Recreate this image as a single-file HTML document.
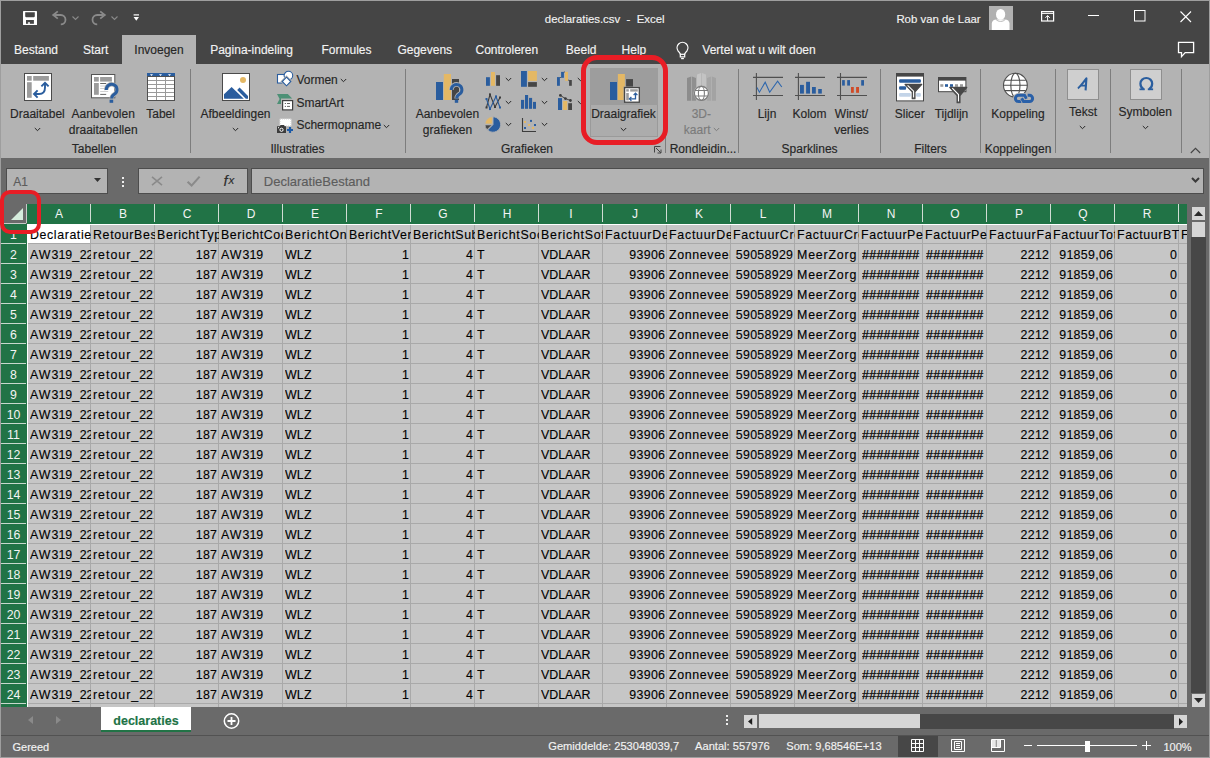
<!DOCTYPE html><html><head><meta charset="utf-8"><style>
html,body{margin:0;padding:0}
body{width:1210px;height:758px;overflow:hidden;position:relative;background:#6a6a6a;font-family:"Liberation Sans",sans-serif}
.t{position:absolute;white-space:pre;-webkit-text-stroke:0.15px currentColor}
.g .t{-webkit-text-stroke:0.12px #000}
.r{position:absolute}
svg.r{overflow:visible}
</style></head><body>
<div class="r" style="left:0px;top:0px;width:1210px;height:64px;background:#454545;"></div>
<div class="t" style="left:404.70px;width:400px;text-align:center;top:14.15px;font-size:11.4px;line-height:11.4px;color:#f2f2f2;font-weight:400;">declaraties.csv  -  Excel</div>
<div class="t" style="left:896.40px;top:14.35px;font-size:11.4px;line-height:11.4px;color:#f2f2f2;font-weight:400;">Rob van de Laar</div>
<svg class="r" style="left:23px;top:11px;" width="14" height="14" viewBox="0 0 14 14"><rect x="0" y="0" width="14" height="14" rx="0.6" fill="#fff"/><path d="M2.2 1.2H11.8V5.6L11 6.3H3L2.2 5.6Z" fill="#454545"/><rect x="3" y="9" width="7.9" height="3.8" fill="#454545"/><rect x="4.9" y="11.3" width="2.1" height="1.5" fill="#fff"/></svg>
<svg class="r" style="left:51px;top:10px;" width="17" height="15" viewBox="0 0 17 15"><path d="M3.5 5H9.8A4.7 4.7 0 0 1 9.8 14.4" fill="none" stroke="#8a8a8a" stroke-width="1.8"/><path d="M6.8 1.4L2.2 5L6.8 8.6" fill="none" stroke="#8a8a8a" stroke-width="1.8"/></svg>
<svg class="r" style="left:71px;top:15px;" width="9" height="6" viewBox="0 0 9 6"><path d="M1.5 1.5l3 3l3-3" fill="none" stroke="#8a8a8a" stroke-width="1.1"/></svg>
<svg class="r" style="left:90px;top:10px;" width="17" height="15" viewBox="0 0 17 15"><path d="M13.5 5H7.2A4.7 4.7 0 0 0 7.2 14.4" fill="none" stroke="#8a8a8a" stroke-width="1.8"/><path d="M10.2 1.4L14.8 5L10.2 8.6" fill="none" stroke="#8a8a8a" stroke-width="1.8"/></svg>
<svg class="r" style="left:110px;top:15px;" width="9" height="6" viewBox="0 0 9 6"><path d="M1.5 1.5l3 3l3-3" fill="none" stroke="#8a8a8a" stroke-width="1.1"/></svg>
<svg class="r" style="left:133px;top:14px;" width="7" height="8" viewBox="0 0 7 8"><rect x="0.6" y="0.3" width="5.4" height="1.2" fill="#fff"/><path d="M0.6 3h5.4l-2.7 3.8z" fill="#fff"/></svg>
<svg class="r" style="left:989px;top:6px;" width="24" height="24" viewBox="0 0 24 24"><rect width="24" height="24" fill="#b1b1b1"/><ellipse cx="11.6" cy="8.4" rx="4.6" ry="5.4" fill="#fff"/><path d="M2.8 24V17.5C2.8 15 4.8 13.4 7.6 13.4H15.8C18.6 13.4 20.5 15 20.5 17.5V24Z" fill="#fff"/><path d="M7 13.4C8 14.6 9.6 15.4 11.6 15.4S15.2 14.6 16.2 13.4" fill="none" stroke="#b1b1b1" stroke-width="0.9"/></svg>
<svg class="r" style="left:1041px;top:11px;" width="14" height="11" viewBox="0 0 14 11"><rect x="0.6" y="0.6" width="12" height="9.4" fill="none" stroke="#fff" stroke-width="1.2"/><path d="M0.6 2.4H12.6" stroke="#fff" stroke-width="1"/><path d="M6.6 10V4.6M4.4 6.8L6.6 4.6L8.8 6.8" fill="none" stroke="#fff" stroke-width="1"/></svg>
<div class="r" style="left:1088px;top:15px;width:11px;height:1px;background:#fff;"></div>
<svg class="r" style="left:1134px;top:10px;" width="12" height="12" viewBox="0 0 12 12"><rect x="0.5" y="0.5" width="10.5" height="10.5" fill="none" stroke="#fff"/></svg>
<svg class="r" style="left:1180px;top:11px;" width="12" height="11" viewBox="0 0 12 11"><path d="M0.5 0.5l10.5 10.5M11 0.5L0.5 11" stroke="#fff" stroke-width="1.1"/></svg>
<div class="r" style="left:122px;top:35px;width:74px;height:29px;background:#b3b3b3;"></div>
<div class="t" style="left:14.00px;top:43.64px;font-size:12px;line-height:12px;color:#f2f2f2;font-weight:400;">Bestand</div>
<div class="t" style="left:83.00px;top:43.64px;font-size:12px;line-height:12px;color:#f2f2f2;font-weight:400;">Start</div>
<div class="t" style="left:210.20px;top:43.64px;font-size:12px;line-height:12px;color:#f2f2f2;font-weight:400;">Pagina-indeling</div>
<div class="t" style="left:321.50px;top:43.64px;font-size:12px;line-height:12px;color:#f2f2f2;font-weight:400;">Formules</div>
<div class="t" style="left:397.40px;top:43.64px;font-size:12px;line-height:12px;color:#f2f2f2;font-weight:400;">Gegevens</div>
<div class="t" style="left:475.50px;top:43.64px;font-size:12px;line-height:12px;color:#f2f2f2;font-weight:400;">Controleren</div>
<div class="t" style="left:565.80px;top:43.64px;font-size:12px;line-height:12px;color:#f2f2f2;font-weight:400;">Beeld</div>
<div class="t" style="left:621.60px;top:43.64px;font-size:12px;line-height:12px;color:#f2f2f2;font-weight:400;">Help</div>
<div class="t" style="left:134.30px;top:43.64px;font-size:12px;line-height:12px;color:#262626;font-weight:400;">Invoegen</div>
<svg class="r" style="left:675px;top:42px;" width="16" height="17" viewBox="0 0 16 17"><path d="M5.4 12.3C4.9 11 4.1 10.2 3.2 9.1A5.4 5.4 0 1 1 11.8 9.1C10.9 10.2 10.1 11 9.6 12.3" fill="none" stroke="#fff" stroke-width="1.3"/><rect x="5.3" y="12.3" width="4.4" height="2.6" fill="none" stroke="#fff" stroke-width="1.2"/><path d="M6.1 16.6H8.9" stroke="#fff" stroke-width="1.2"/></svg>
<div class="t" style="left:702.30px;top:43.64px;font-size:12px;line-height:12px;color:#f2f2f2;font-weight:400;">Vertel wat u wilt doen</div>
<svg class="r" style="left:1177px;top:41px;" width="18" height="17" viewBox="0 0 18 17"><path d="M1.5 1.3H16.6V11.6H8.2L4.5 15.6V11.6H1.5Z" fill="none" stroke="#fff" stroke-width="1.3"/></svg>
<div class="r" style="left:0px;top:64px;width:1210px;height:94px;background:#b3b3b3;"></div>
<div class="r" style="left:190px;top:69px;width:1px;height:84px;background:#7d7d7d;"></div>
<div class="r" style="left:405px;top:69px;width:1px;height:84px;background:#7d7d7d;"></div>
<div class="r" style="left:665px;top:69px;width:1px;height:84px;background:#7d7d7d;"></div>
<div class="r" style="left:738px;top:69px;width:1px;height:84px;background:#7d7d7d;"></div>
<div class="r" style="left:880px;top:69px;width:1px;height:84px;background:#7d7d7d;"></div>
<div class="r" style="left:980px;top:69px;width:1px;height:84px;background:#7d7d7d;"></div>
<div class="r" style="left:1055px;top:69px;width:1px;height:84px;background:#7d7d7d;"></div>
<div class="r" style="left:1110px;top:69px;width:1px;height:84px;background:#7d7d7d;"></div>
<div class="r" style="left:1181px;top:69px;width:1px;height:84px;background:#7d7d7d;"></div>
<div class="t" style="left:-105.80px;width:400px;text-align:center;top:143.14px;font-size:12px;line-height:12px;color:#262626;font-weight:400;">Tabellen</div>
<div class="t" style="left:97.50px;width:400px;text-align:center;top:143.14px;font-size:12px;line-height:12px;color:#262626;font-weight:400;">Illustraties</div>
<div class="t" style="left:327.00px;width:400px;text-align:center;top:143.14px;font-size:12px;line-height:12px;color:#262626;font-weight:400;">Grafieken</div>
<div class="t" style="left:609.60px;width:400px;text-align:center;top:143.14px;font-size:12px;line-height:12px;color:#262626;font-weight:400;">Sparklines</div>
<div class="t" style="left:730.50px;width:400px;text-align:center;top:143.14px;font-size:12px;line-height:12px;color:#262626;font-weight:400;">Filters</div>
<div class="t" style="left:818.00px;width:400px;text-align:center;top:143.14px;font-size:12px;line-height:12px;color:#262626;font-weight:400;">Koppelingen</div>
<div class="t" style="left:669.70px;top:143.14px;font-size:12px;line-height:12px;color:#262626;font-weight:400;">Rondleidin...</div>
<div class="t" style="left:-162.60px;width:400px;text-align:center;top:107.74px;font-size:12px;line-height:12px;color:#262626;font-weight:400;">Draaitabel</div>
<svg class="r" style="left:34.1px;top:127.0px;" width="7" height="5" viewBox="0 0 7 5"><path d="M0.8 1l2.7 2.7L6.2 1" fill="none" stroke="#262626" stroke-width="1"/></svg>
<div class="t" style="left:-96.80px;width:400px;text-align:center;top:107.74px;font-size:12px;line-height:12px;color:#262626;font-weight:400;">Aanbevolen</div>
<div class="t" style="left:-96.80px;width:400px;text-align:center;top:124.04px;font-size:12px;line-height:12px;color:#262626;font-weight:400;">draaitabellen</div>
<div class="t" style="left:-39.40px;width:400px;text-align:center;top:107.74px;font-size:12px;line-height:12px;color:#262626;font-weight:400;">Tabel</div>
<div class="t" style="left:35.50px;width:400px;text-align:center;top:107.74px;font-size:12px;line-height:12px;color:#262626;font-weight:400;">Afbeeldingen</div>
<svg class="r" style="left:232.0px;top:127.0px;" width="7" height="5" viewBox="0 0 7 5"><path d="M0.8 1l2.7 2.7L6.2 1" fill="none" stroke="#262626" stroke-width="1"/></svg>
<div class="t" style="left:296.40px;top:73.84px;font-size:12px;line-height:12px;color:#262626;font-weight:400;">Vormen</div>
<svg class="r" style="left:340.0px;top:78.0px;" width="7" height="5" viewBox="0 0 7 5"><path d="M0.8 1l2.7 2.7L6.2 1" fill="none" stroke="#262626" stroke-width="1"/></svg>
<div class="t" style="left:296.40px;top:96.84px;font-size:12px;line-height:12px;color:#262626;font-weight:400;">SmartArt</div>
<div class="t" style="left:296.40px;top:119.44px;font-size:12px;line-height:12px;color:#262626;font-weight:400;">Schermopname</div>
<svg class="r" style="left:383.0px;top:123.5px;" width="7" height="5" viewBox="0 0 7 5"><path d="M0.8 1l2.7 2.7L6.2 1" fill="none" stroke="#262626" stroke-width="1"/></svg>
<div class="t" style="left:247.40px;width:400px;text-align:center;top:107.54px;font-size:12px;line-height:12px;color:#262626;font-weight:400;">Aanbevolen</div>
<div class="t" style="left:247.50px;width:400px;text-align:center;top:124.14px;font-size:12px;line-height:12px;color:#262626;font-weight:400;">grafieken</div>
<svg class="r" style="left:505.2px;top:77.0px;" width="7" height="5" viewBox="0 0 7 5"><path d="M0.8 1l2.7 2.7L6.2 1" fill="none" stroke="#262626" stroke-width="1"/></svg>
<svg class="r" style="left:505.2px;top:99.5px;" width="7" height="5" viewBox="0 0 7 5"><path d="M0.8 1l2.7 2.7L6.2 1" fill="none" stroke="#262626" stroke-width="1"/></svg>
<svg class="r" style="left:505.2px;top:122.0px;" width="7" height="5" viewBox="0 0 7 5"><path d="M0.8 1l2.7 2.7L6.2 1" fill="none" stroke="#262626" stroke-width="1"/></svg>
<svg class="r" style="left:541.0px;top:77.0px;" width="7" height="5" viewBox="0 0 7 5"><path d="M0.8 1l2.7 2.7L6.2 1" fill="none" stroke="#262626" stroke-width="1"/></svg>
<svg class="r" style="left:541.0px;top:99.5px;" width="7" height="5" viewBox="0 0 7 5"><path d="M0.8 1l2.7 2.7L6.2 1" fill="none" stroke="#262626" stroke-width="1"/></svg>
<svg class="r" style="left:541.0px;top:122.0px;" width="7" height="5" viewBox="0 0 7 5"><path d="M0.8 1l2.7 2.7L6.2 1" fill="none" stroke="#262626" stroke-width="1"/></svg>
<svg class="r" style="left:576.8px;top:77.0px;" width="7" height="5" viewBox="0 0 7 5"><path d="M0.8 1l2.7 2.7L6.2 1" fill="none" stroke="#262626" stroke-width="1"/></svg>
<svg class="r" style="left:576.8px;top:99.5px;" width="7" height="5" viewBox="0 0 7 5"><path d="M0.8 1l2.7 2.7L6.2 1" fill="none" stroke="#262626" stroke-width="1"/></svg>
<svg class="r" style="left:654px;top:146px;" width="8" height="7" viewBox="0 0 8 7"><path d="M0.5 6.5v-6h6" fill="none" stroke="#444"/><path d="M2 2l5 5M3.5 7h3.5v-3.5" fill="none" stroke="#444"/></svg>
<div class="r" style="left:590px;top:68px;width:68px;height:37px;background:#9d9d9d;"></div>
<div class="r" style="left:590px;top:105px;width:68px;height:32px;background:#acacac;box-sizing:border-box;border:1px solid #9a9a9a;border-top:none"></div>
<div class="t" style="left:423.50px;width:400px;text-align:center;top:107.74px;font-size:12px;line-height:12px;color:#262626;font-weight:400;">Draaigrafiek</div>
<svg class="r" style="left:619.8px;top:126.9px;" width="7" height="5" viewBox="0 0 7 5"><path d="M0.8 1l2.7 2.7L6.2 1" fill="none" stroke="#262626" stroke-width="1"/></svg>
<div class="t" style="left:501.30px;width:400px;text-align:center;top:107.74px;font-size:12px;line-height:12px;color:#7b7b7b;font-weight:400;">3D-</div>
<div class="t" style="left:683.80px;top:123.94px;font-size:12px;line-height:12px;color:#7b7b7b;font-weight:400;">kaart</div>
<svg class="r" style="left:712.5px;top:127.0px;" width="7" height="5" viewBox="0 0 7 5"><path d="M0.8 1l2.7 2.7L6.2 1" fill="none" stroke="#7b7b7b" stroke-width="1"/></svg>
<div class="t" style="left:567.00px;width:400px;text-align:center;top:107.74px;font-size:12px;line-height:12px;color:#262626;font-weight:400;">Lijn</div>
<div class="t" style="left:609.50px;width:400px;text-align:center;top:107.74px;font-size:12px;line-height:12px;color:#262626;font-weight:400;">Kolom</div>
<div class="t" style="left:651.50px;width:400px;text-align:center;top:107.74px;font-size:12px;line-height:12px;color:#262626;font-weight:400;">Winst/</div>
<div class="t" style="left:651.50px;width:400px;text-align:center;top:123.94px;font-size:12px;line-height:12px;color:#262626;font-weight:400;">verlies</div>
<div class="t" style="left:709.80px;width:400px;text-align:center;top:107.74px;font-size:12px;line-height:12px;color:#262626;font-weight:400;">Slicer</div>
<div class="t" style="left:751.50px;width:400px;text-align:center;top:107.74px;font-size:12px;line-height:12px;color:#262626;font-weight:400;">Tijdlijn</div>
<div class="t" style="left:818.00px;width:400px;text-align:center;top:107.74px;font-size:12px;line-height:12px;color:#262626;font-weight:400;">Koppeling</div>
<div class="r" style="left:1067px;top:69px;width:32px;height:31px;background:#cfcfcf;box-sizing:border-box;border:1px solid #8f8f8f"></div>
<div class="r" style="left:1130px;top:69px;width:32px;height:31px;background:#cfcfcf;box-sizing:border-box;border:1px solid #8f8f8f"></div>
<div class="t" style="left:883.00px;width:400px;text-align:center;top:105.74px;font-size:12px;line-height:12px;color:#262626;font-weight:400;">Tekst</div>
<svg class="r" style="left:1079.0px;top:125.1px;" width="7" height="5" viewBox="0 0 7 5"><path d="M0.8 1l2.7 2.7L6.2 1" fill="none" stroke="#262626" stroke-width="1"/></svg>
<div class="t" style="left:945.30px;width:400px;text-align:center;top:105.74px;font-size:12px;line-height:12px;color:#262626;font-weight:400;">Symbolen</div>
<svg class="r" style="left:1142.0px;top:125.1px;" width="7" height="5" viewBox="0 0 7 5"><path d="M0.8 1l2.7 2.7L6.2 1" fill="none" stroke="#262626" stroke-width="1"/></svg>
<svg class="r" style="left:1190px;top:147px;" width="11" height="7" viewBox="0 0 11 7"><path d="M0.8 6l4.7-4.7L10.2 6" fill="none" stroke="#444" stroke-width="1.1"/></svg>
<svg class="r" style="left:24px;top:73px;" width="28" height="28" viewBox="0 0 28 28"><rect x="0.5" y="0.5" width="27" height="27" fill="#fff" stroke="#4a4a4a"/><rect x="3" y="3" width="4.7" height="4.7" fill="#9c9c9c"/><rect x="9.2" y="3" width="15.7" height="4.7" fill="#9c9c9c"/><rect x="3" y="9.2" width="4.7" height="15.6" fill="#9c9c9c"/><path d="M10.3 21H15C18.8 21 21 18.6 21 14.5V10.2" fill="none" stroke="#2a5d9e" stroke-width="1.9"/><path d="M13.6 17.4L10 21L13.6 24.6M17.4 13.4L21 9.8L24.6 13.4" fill="none" stroke="#2a5d9e" stroke-width="1.9"/></svg>
<svg class="r" style="left:91px;top:74px;" width="30" height="30" viewBox="0 0 30 30"><rect x="0.5" y="0.5" width="23.3" height="23.3" fill="#fff" stroke="#555"/><rect x="3" y="3" width="4.8" height="4.6" fill="#9c9c9c"/><rect x="9.1" y="3" width="11.8" height="4.6" fill="#9c9c9c"/><rect x="3" y="9" width="4.8" height="11.8" fill="#9c9c9c"/><path d="M9.2 9.5h6M9.2 20.4h6" stroke="#555" stroke-width="0.9"/><path d="M9.2 12h8M9.2 14.5h8M9.2 17.5h8" stroke="#d0d0d0" stroke-width="1.2"/><path d="M15.3 16A5.35 5.35 0 1 1 24 19.8C22.2 21 20.7 21.8 20.7 24.4" fill="none" stroke="#b3b3b3" stroke-width="4.4"/><rect x="17.6" y="24.8" width="5.5" height="4.9" fill="#b3b3b3"/><path d="M15.3 16A5.35 5.35 0 1 1 24 19.8C22.2 21 20.7 21.8 20.7 24.4" fill="none" stroke="#2a5d9e" stroke-width="3"/><rect x="18.6" y="25.7" width="3.6" height="3.1" fill="#2a5d9e"/></svg>
<svg class="r" style="left:147px;top:73px;" width="28" height="28" viewBox="0 0 28 28"><rect x="0.5" y="0.5" width="27" height="27" fill="#fff" stroke="#505050"/><rect x="0" y="0" width="28" height="4" fill="#2a5d9e"/><path d="M3 1.3h3L4.5 3zM12 1.3h3L13.5 3zM21 1.3h3L22.5 3z" fill="#fff"/><path d="M9.5 4v23.5M18.5 4v23.5M1 7.5h26M1 11.5h26M1 15.5h26M1 19.5h26M1 23.5h26" stroke="#9a9a9a" stroke-width="1"/><rect x="0.5" y="3.5" width="27" height="24" fill="none" stroke="#505050"/></svg>
<svg class="r" style="left:222px;top:73px;" width="28" height="28" viewBox="0 0 28 28"><rect x="0.5" y="0.5" width="27" height="27" fill="#fff" stroke="#4a4a4a"/><circle cx="21" cy="7" r="3" fill="#e4b865"/><path d="M2 25.8V21.3L9.6 14L21.8 25.8Z" fill="#2a5d9e"/><path d="M15.2 17L17.6 14.6L26 22.9V25.8H23.8Z" fill="#2a5d9e"/></svg>
<svg class="r" style="left:276px;top:70px;" width="18" height="18" viewBox="0 0 18 18"><rect x="1.5" y="4.5" width="8.8" height="8.5" fill="#fff" stroke="#2a5d9e" stroke-width="1.1"/><circle cx="12.4" cy="5.6" r="4.3" fill="#fff" stroke="#2a5d9e" stroke-width="1.1"/><path d="M10.5 7.2L14.8 11.5L10.5 15.8L6.2 11.5Z" fill="#fff" stroke="#b3b3b3" stroke-width="2.6"/><path d="M10.5 7.2L14.8 11.5L10.5 15.8L6.2 11.5Z" fill="#fff" stroke="#2a5d9e" stroke-width="1.1"/></svg>
<svg class="r" style="left:276px;top:92px;" width="18" height="19" viewBox="0 0 18 19"><path d="M1 2H11.8L16.2 6.6H5V12H1L3.6 7Z" fill="#4d9076"/><rect x="5.8" y="7.8" width="11.6" height="10.6" fill="#b3b3b3"/><rect x="6.6" y="8.6" width="10" height="9.3" fill="#fff" stroke="#404040" stroke-width="1.2"/><path d="M8.8 11.5h1.2M11 11.5h3M8.8 14.4h1.2M11 14.4h3" stroke="#666" stroke-width="1"/></svg>
<svg class="r" style="left:276px;top:118px;" width="18" height="16" viewBox="0 0 18 16"><rect x="3.8" y="0.8" width="11.5" height="7.4" fill="#fff"/><path d="M4 1h11M4 8h11M4 1v7M15 1v7" stroke="#ccc" stroke-width="0.9" stroke-dasharray="1 1"/><path d="M1 8.3h2.8l0.8-1.2h3.3l0.8 1.2H10v6.6H1z" fill="#3c3c3c"/><circle cx="5.5" cy="11.8" r="1.6" fill="none" stroke="#fff" stroke-width="1"/><rect x="2" y="9.2" width="1" height="1" fill="#fff"/><path d="M14 9v6M11 12h6" stroke="#1d5aa6" stroke-width="2.2"/></svg>
<svg class="r" style="left:435px;top:73px;" width="30" height="30" viewBox="0 0 30 30"><rect x="1" y="9" width="7" height="18" fill="#2a5d9e"/><rect x="8.8" y="1" width="7.2" height="26" fill="#e4b865"/><rect x="17" y="6" width="7" height="21" fill="#454545"/><path d="M16.3 17A5.3 5.3 0 1 1 25 20.8C23.2 22 21.7 22.8 21.7 25.4" fill="none" stroke="#b3b3b3" stroke-width="4.6"/><path d="M16.3 17A5.3 5.3 0 1 1 25 20.8C23.2 22 21.7 22.8 21.7 25.4" fill="none" stroke="#2a5d9e" stroke-width="3"/><rect x="19.8" y="26.6" width="3.4" height="3.2" fill="#2a5d9e"/></svg>
<svg class="r" style="left:485px;top:71px;" width="16" height="16" viewBox="0 0 16 16"><rect x="1" y="6.2" width="3.9" height="8.6" fill="#2a5d9e"/><rect x="6" y="1" width="4" height="13.8" fill="#e4b865"/><rect x="11.1" y="4.2" width="3.9" height="10.6" fill="#454545"/></svg>
<svg class="r" style="left:521px;top:71px;" width="16" height="16" viewBox="0 0 16 16"><rect x="0" y="0" width="5.9" height="15.8" fill="#2a5d9e"/><rect x="7.1" y="0" width="8.8" height="9.9" fill="#e4b865"/><rect x="7.1" y="11.1" width="8.8" height="4.7" fill="#454545"/></svg>
<svg class="r" style="left:556px;top:71px;" width="16" height="16" viewBox="0 0 16 16"><rect x="1" y="6.1" width="2.9" height="8.7" fill="#2a5d9e"/><rect x="5.1" y="0.9" width="2.8" height="5.9" fill="#2a5d9e"/><rect x="9" y="0.9" width="3" height="8.9" fill="#e4b865"/><rect x="13.1" y="9" width="2.7" height="5.8" fill="#454545"/><path d="M3.9 6.5h1.2M7.9 1h1.1M12 9.2h1.1" stroke="#222" stroke-width="0.6"/></svg>
<svg class="r" style="left:485px;top:93px;" width="16" height="18" viewBox="0 0 16 18"><path d="M1.5 14.5L5 1.5L10 14L15 4.5" fill="none" stroke="#3c3c3c" stroke-width="1.1"/><path d="M1.5 6L5 16L11 3.5L15 14.5" fill="none" stroke="#2a5d9e" stroke-width="1.1"/><rect x="0.5" y="13.5" width="2" height="2" fill="#3c3c3c"/><rect x="4" y="0.5" width="2" height="2" fill="#3c3c3c"/><rect x="9" y="13" width="2" height="2" fill="#3c3c3c"/><rect x="14" y="3.5" width="2" height="2" fill="#3c3c3c"/><rect x="0.5" y="5" width="2" height="2" fill="#2a5d9e"/><rect x="4" y="15" width="2" height="2" fill="#2a5d9e"/><rect x="10" y="2.5" width="2" height="2" fill="#2a5d9e"/><rect x="14" y="13.5" width="2" height="2" fill="#2a5d9e"/></svg>
<svg class="r" style="left:521px;top:94px;" width="16" height="16" viewBox="0 0 16 16"><rect x="0" y="5.9" width="3.1" height="8.9" fill="#2a5d9e"/><rect x="4" y="1" width="3.1" height="13.8" fill="#2a5d9e"/><rect x="8" y="3.9" width="3.1" height="10.9" fill="#2a5d9e"/><rect x="12" y="7.9" width="3" height="6.9" fill="#2a5d9e"/></svg>
<svg class="r" style="left:557px;top:93px;" width="16" height="18" viewBox="0 0 16 18"><rect x="1" y="5.1" width="4" height="11.9" fill="#2a5d9e"/><rect x="6.1" y="8" width="4.1" height="9" fill="#e4b865"/><rect x="11.2" y="10.2" width="3.8" height="6.8" fill="#454545"/><path d="M3.4 2.4L8.4 5.6L13.4 7.5" fill="none" stroke="#3c3c3c" stroke-width="0.9"/><circle cx="3.4" cy="2.4" r="1.4" fill="#3c3c3c"/><circle cx="8.4" cy="5.6" r="1.4" fill="#3c3c3c"/><circle cx="13.4" cy="7.5" r="1.4" fill="#3c3c3c"/></svg>
<svg class="r" style="left:484px;top:116px;" width="17" height="17" viewBox="0 0 17 17"><path d="M9 0.8A7.7 7.7 0 1 1 3.6 14L9 8.6Z" fill="#2a5d9e" stroke="#b3b3b3" stroke-width="0.9"/><path d="M8.3 0.8V8H1A7.3 7.3 0 0 1 8.3 0.8Z" fill="#e4b865" stroke="#b3b3b3" stroke-width="0.7"/><path d="M1 8.9H8L3.1 13.6A7.3 7.3 0 0 1 1 8.9Z" fill="#454545" stroke="#b3b3b3" stroke-width="0.7"/></svg>
<svg class="r" style="left:521px;top:117px;" width="16" height="16" viewBox="0 0 16 16"><path d="M1.5 1v13.5H15" fill="none" stroke="#3c3c3c" stroke-width="1.1"/><rect x="3" y="4" width="2" height="2" fill="#e4b865"/><rect x="9" y="2.9" width="2" height="2" fill="#2a5d9e"/><rect x="7" y="7" width="2" height="2" fill="#e4b865"/><rect x="13" y="7" width="2" height="2" fill="#2a5d9e"/><rect x="3" y="10" width="2" height="2" fill="#2a5d9e"/><rect x="11" y="10" width="2" height="2" fill="#e4b865"/></svg>
<svg class="r" style="left:609px;top:73px;" width="32" height="31" viewBox="0 0 32 31"><rect x="1" y="9" width="7" height="18" fill="#2a5d9e"/><rect x="8.9" y="1" width="7" height="26" fill="#e4b865"/><rect x="17.1" y="6.1" width="6.9" height="8" fill="#454545"/><rect x="14.5" y="13.5" width="17" height="17" fill="#9b9b9b"/><rect x="15.6" y="14.6" width="14.7" height="14.6" fill="#fff" stroke="#474747" stroke-width="1.3"/><rect x="17.2" y="16.2" width="2.6" height="2.4" fill="#9c9c9c"/><rect x="21.2" y="16.2" width="7.6" height="2.4" fill="#9c9c9c"/><rect x="17.2" y="20" width="2.6" height="7.4" fill="#9c9c9c"/><path d="M20.5 25.8H26.5V20.2" fill="none" stroke="#2a5d9e" stroke-width="1.3"/><path d="M22.4 23.9L20.5 25.8L22.4 27.7M24.6 22.1L26.5 20.2L28.4 22.1" fill="none" stroke="#2a5d9e" stroke-width="1.3"/></svg>
<svg class="r" style="left:686px;top:72px;" width="31" height="30" viewBox="0 0 31 30"><path d="M1 6L5.3 4.6V28.7H1Z" fill="#8c8c8c"/><path d="M6 4.6L10 6V28.7H6Z" fill="#8f8f8f"/><path d="M11 2.5L15.2 1V22H11Z" fill="#c6c6c6"/><path d="M16 1L20 2.5V22H16Z" fill="#c3c3c3"/><path d="M21 6L25.2 4.6V28.7H21Z" fill="#a6a6a6"/><path d="M26 4.6L30 6V28.7H26Z" fill="#a3a3a3"/><circle cx="15.4" cy="21.3" r="8" fill="#b3b3b3"/><circle cx="15.4" cy="21.3" r="7" fill="#fff" stroke="#7c7c7c" stroke-width="1.2"/><ellipse cx="15.4" cy="21.3" rx="3" ry="7" fill="none" stroke="#7c7c7c" stroke-width="1.1"/><path d="M8.8 18.5h13.2M8.8 24h13.2" stroke="#7c7c7c" stroke-width="1.1"/></svg>
<svg class="r" style="left:752px;top:72px;" width="32" height="29" viewBox="0 0 32 29"><path d="M4.4 1v27M1 5.4h30M1 23.5h30" stroke="#4f4f4f" stroke-width="1.1"/><path d="M5 15.6L7.4 20.2L13.2 10.2L17.7 20.2L25.6 9.2L29.8 15" fill="none" stroke="#2e67ad" stroke-width="1.1"/></svg>
<svg class="r" style="left:794px;top:72px;" width="32" height="29" viewBox="0 0 32 29"><path d="M4.4 1v27M1 5.4h30M1 23.5h30" stroke="#4f4f4f" stroke-width="1.1"/><rect x="6" y="12.9" width="3.9" height="8.7" fill="#2a5d9e"/><rect x="12.1" y="9.8" width="3.9" height="11.8" fill="#2a5d9e"/><rect x="18" y="15" width="3.8" height="6.6" fill="#2a5d9e"/><rect x="24.2" y="17" width="3.6" height="4.6" fill="#2a5d9e"/></svg>
<svg class="r" style="left:836px;top:72px;" width="32" height="29" viewBox="0 0 32 29"><path d="M4.5 1v27M1 5.4h30M1 23.5h30" stroke="#4f4f4f" stroke-width="1.1"/><rect x="6.1" y="8.1" width="2.7" height="5.5" fill="#2a5d9e"/><rect x="11.2" y="8.1" width="2.8" height="5.5" fill="#2a5d9e"/><rect x="25.2" y="8.1" width="2.8" height="5.5" fill="#2a5d9e"/><rect x="15" y="15" width="2.8" height="5.8" fill="#d04a26"/><rect x="20.1" y="15" width="2.9" height="5.8" fill="#d04a26"/></svg>
<svg class="r" style="left:896px;top:73px;" width="28" height="29" viewBox="0 0 28 29"><rect x="0.5" y="0.5" width="27" height="27.4" fill="#fff" stroke="#474747"/><rect x="0" y="0" width="28" height="3.6" fill="#474747"/><rect x="3.1" y="6.2" width="21.8" height="3.5" rx="1" fill="#2a5d9e"/><rect x="3.1" y="13.2" width="7" height="3.6" rx="1" fill="#2a5d9e"/><rect x="3.1" y="20" width="11.7" height="3.8" rx="1" fill="#c3d4e8"/><rect x="20.1" y="20" width="4.8" height="3.8" rx="1" fill="#c3d4e8"/><path d="M9 11.4H25.8L19 18.8V25.8H16.2V18.8Z" fill="#474747" stroke="#474747" stroke-width="1.1" stroke-linejoin="round"/><path d="M11.6 12.3L17.6 18.2V24.6" fill="none" stroke="#fff" stroke-width="1.1"/></svg>
<svg class="r" style="left:938px;top:77px;" width="30" height="27" viewBox="0 0 30 27"><rect x="0.5" y="0.5" width="27.4" height="14.2" fill="#fff" stroke="#474747"/><rect x="0" y="0" width="28" height="3.6" fill="#474747"/><rect x="2.3" y="7.2" width="3" height="2.6" fill="#9c9c9c"/><rect x="7" y="7.2" width="3" height="2.6" fill="#2a5d9e"/><rect x="12" y="7.2" width="3" height="2.6" fill="#2a5d9e"/><rect x="17" y="7.2" width="3" height="2.6" fill="#9c9c9c"/><rect x="22" y="7.2" width="3" height="2.6" fill="#9c9c9c"/><path d="M11.7 10.4H28.8L22 18.6V25.7H19.1V18.6Z" fill="#474747" stroke="#474747" stroke-width="1.1" stroke-linejoin="round"/><path d="M14.3 11.2L20.5 17.5V24.5" fill="none" stroke="#fff" stroke-width="1.1"/></svg>
<svg class="r" style="left:1002px;top:72px;" width="34" height="32" viewBox="0 0 34 32"><circle cx="13.4" cy="13.2" r="11.9" fill="#fff" stroke="#4f4f4f" stroke-width="1.1"/><ellipse cx="13.4" cy="13.2" rx="4.6" ry="11.9" fill="none" stroke="#4f4f4f" stroke-width="1.1"/><path d="M1.5 13.2h23.8M3 8.2h20.8M3 18.6h20.8" stroke="#4f4f4f" stroke-width="1.1"/><rect x="11" y="21" width="23" height="11" rx="5.5" fill="#b3b3b3"/><path d="M19.5 29.5H16.5A3.1 3.1 0 0 1 16.5 23.3H22.5L24.5 26.8" fill="none" stroke="#2a60a8" stroke-width="3"/><path d="M25 23.3H27.5A3.1 3.1 0 0 1 27.5 29.5H21.5L19.6 26.2" fill="none" stroke="#b3b3b3" stroke-width="4.2"/><path d="M25.6 23.3H27.5A3.1 3.1 0 0 1 27.5 29.5H21.5L19.6 26.2" fill="none" stroke="#2a60a8" stroke-width="3"/></svg>
<svg class="r" style="left:1076px;top:77px;" width="14" height="15" viewBox="0 0 14 15"><path d="M1.8 11.2C3.2 10.8 5.5 8 10.4 1.4L9.6 13.4" fill="none" stroke="#2a5e9f" stroke-width="2.1" stroke-linejoin="round"/><path d="M5.2 8.6H10" stroke="#2a5e9f" stroke-width="1.8"/></svg>
<svg class="r" style="left:1138px;top:77px;" width="17" height="15" viewBox="0 0 17 15"><path d="M5.6 12.2C3.4 11 2.4 9 2.4 6.6A5.9 5.6 0 0 1 14.2 6.6C14.2 9 13.2 11 11 12.2" fill="none" stroke="#2a5e9f" stroke-width="2.2"/><rect x="1.5" y="11.4" width="5.3" height="1.8" fill="#2a5e9f"/><rect x="9.8" y="11.4" width="5.3" height="1.8" fill="#2a5e9f"/></svg>
<div class="r" style="left:6px;top:168px;width:102px;height:26px;background:#b3b3b3;box-sizing:border-box;border:1px solid #4d4d4d"></div>
<div class="t" style="left:13.20px;top:175.84px;font-size:12px;line-height:12px;color:#5c5c5c;font-weight:400;">A1</div>
<svg class="r" style="left:94px;top:178px;" width="8" height="5" viewBox="0 0 8 5"><path d="M0 0h7l-3.5 4z" fill="#333"/></svg>
<div class="r" style="left:122px;top:177px;width:2px;height:2px;background:#eee;"></div>
<div class="r" style="left:122px;top:181px;width:2px;height:2px;background:#eee;"></div>
<div class="r" style="left:122px;top:185px;width:2px;height:2px;background:#eee;"></div>
<div class="r" style="left:138px;top:168px;width:110px;height:26px;background:#b3b3b3;box-sizing:border-box;border:1px solid #4d4d4d"></div>
<svg class="r" style="left:151px;top:176px;" width="12" height="10" viewBox="0 0 12 10"><path d="M1 0.8L11 9.2M11 0.8L1 9.2" stroke="#8a8a8a" stroke-width="1.6"/></svg>
<svg class="r" style="left:186px;top:175px;" width="15" height="12" viewBox="0 0 15 12"><path d="M1.6 6.8L5.6 10.6L13.6 1.6" fill="none" stroke="#8a8a8a" stroke-width="2.1"/></svg>
<div class="t" style="left:223.50px;top:172.60px;font-size:15px;line-height:15px;color:#2e2e2e;font-weight:400;font-family:"Liberation Serif",serif;-webkit-text-stroke:0.4px #2e2e2e"><i>f</i></div>
<div class="t" style="left:228.40px;top:175.17px;font-size:11.5px;line-height:11.5px;color:#2e2e2e;font-weight:400;font-family:"Liberation Serif",serif;-webkit-text-stroke:0.5px #2e2e2e"><i>x</i></div>
<div class="r" style="left:251px;top:168px;width:953px;height:26px;background:#b3b3b3;box-sizing:border-box;border:1px solid #4d4d4d"></div>
<div class="t" style="left:263.80px;top:175.00px;font-size:13px;line-height:13px;color:#5c5c5c;font-weight:400;">DeclaratieBestand</div>
<svg class="r" style="left:1191px;top:177px;" width="9" height="6" viewBox="0 0 9 6"><path d="M1 1l3.5 3.5L8 1" fill="none" stroke="#3a3a3a" stroke-width="2"/></svg>
<div class="r" style="left:1px;top:204px;width:25px;height:20px;background:#6a6a6a;"></div>
<svg class="r" style="left:11px;top:208px;" width="13" height="12" viewBox="0 0 13 12"><path d="M12 0V12H0z" fill="#d5ecdc"/></svg>
<div class="r" style="left:26px;top:204px;width:1px;height:19px;background:#c8c8c8;"></div>
<div class="r" style="left:1px;top:223px;width:25px;height:1px;background:#c8c8c8;"></div>
<div class="r" style="left:27px;top:204px;width:1160px;height:20px;background:#217346;"></div>
<div class="r" style="left:27px;top:224px;width:1160px;height:1px;background:#ffffff;"></div>
<div class="t" style="left:-141.00px;width:400px;text-align:center;top:208.14px;font-size:12px;line-height:12px;color:#f4f4f4;font-weight:400;-webkit-text-stroke:0">A</div>
<div class="r" style="left:90px;top:204px;width:1px;height:18px;background:#d0dcd4;"></div>
<div class="t" style="left:-77.00px;width:400px;text-align:center;top:208.14px;font-size:12px;line-height:12px;color:#f4f4f4;font-weight:400;-webkit-text-stroke:0">B</div>
<div class="r" style="left:154px;top:204px;width:1px;height:18px;background:#d0dcd4;"></div>
<div class="t" style="left:-13.00px;width:400px;text-align:center;top:208.14px;font-size:12px;line-height:12px;color:#f4f4f4;font-weight:400;-webkit-text-stroke:0">C</div>
<div class="r" style="left:218px;top:204px;width:1px;height:18px;background:#d0dcd4;"></div>
<div class="t" style="left:51.00px;width:400px;text-align:center;top:208.14px;font-size:12px;line-height:12px;color:#f4f4f4;font-weight:400;-webkit-text-stroke:0">D</div>
<div class="r" style="left:282px;top:204px;width:1px;height:18px;background:#d0dcd4;"></div>
<div class="t" style="left:115.00px;width:400px;text-align:center;top:208.14px;font-size:12px;line-height:12px;color:#f4f4f4;font-weight:400;-webkit-text-stroke:0">E</div>
<div class="r" style="left:346px;top:204px;width:1px;height:18px;background:#d0dcd4;"></div>
<div class="t" style="left:179.00px;width:400px;text-align:center;top:208.14px;font-size:12px;line-height:12px;color:#f4f4f4;font-weight:400;-webkit-text-stroke:0">F</div>
<div class="r" style="left:410px;top:204px;width:1px;height:18px;background:#d0dcd4;"></div>
<div class="t" style="left:243.00px;width:400px;text-align:center;top:208.14px;font-size:12px;line-height:12px;color:#f4f4f4;font-weight:400;-webkit-text-stroke:0">G</div>
<div class="r" style="left:474px;top:204px;width:1px;height:18px;background:#d0dcd4;"></div>
<div class="t" style="left:307.00px;width:400px;text-align:center;top:208.14px;font-size:12px;line-height:12px;color:#f4f4f4;font-weight:400;-webkit-text-stroke:0">H</div>
<div class="r" style="left:538px;top:204px;width:1px;height:18px;background:#d0dcd4;"></div>
<div class="t" style="left:371.00px;width:400px;text-align:center;top:208.14px;font-size:12px;line-height:12px;color:#f4f4f4;font-weight:400;-webkit-text-stroke:0">I</div>
<div class="r" style="left:602px;top:204px;width:1px;height:18px;background:#d0dcd4;"></div>
<div class="t" style="left:435.00px;width:400px;text-align:center;top:208.14px;font-size:12px;line-height:12px;color:#f4f4f4;font-weight:400;-webkit-text-stroke:0">J</div>
<div class="r" style="left:666px;top:204px;width:1px;height:18px;background:#d0dcd4;"></div>
<div class="t" style="left:499.00px;width:400px;text-align:center;top:208.14px;font-size:12px;line-height:12px;color:#f4f4f4;font-weight:400;-webkit-text-stroke:0">K</div>
<div class="r" style="left:730px;top:204px;width:1px;height:18px;background:#d0dcd4;"></div>
<div class="t" style="left:563.00px;width:400px;text-align:center;top:208.14px;font-size:12px;line-height:12px;color:#f4f4f4;font-weight:400;-webkit-text-stroke:0">L</div>
<div class="r" style="left:794px;top:204px;width:1px;height:18px;background:#d0dcd4;"></div>
<div class="t" style="left:627.00px;width:400px;text-align:center;top:208.14px;font-size:12px;line-height:12px;color:#f4f4f4;font-weight:400;-webkit-text-stroke:0">M</div>
<div class="r" style="left:858px;top:204px;width:1px;height:18px;background:#d0dcd4;"></div>
<div class="t" style="left:691.00px;width:400px;text-align:center;top:208.14px;font-size:12px;line-height:12px;color:#f4f4f4;font-weight:400;-webkit-text-stroke:0">N</div>
<div class="r" style="left:922px;top:204px;width:1px;height:18px;background:#d0dcd4;"></div>
<div class="t" style="left:755.00px;width:400px;text-align:center;top:208.14px;font-size:12px;line-height:12px;color:#f4f4f4;font-weight:400;-webkit-text-stroke:0">O</div>
<div class="r" style="left:986px;top:204px;width:1px;height:18px;background:#d0dcd4;"></div>
<div class="t" style="left:819.00px;width:400px;text-align:center;top:208.14px;font-size:12px;line-height:12px;color:#f4f4f4;font-weight:400;-webkit-text-stroke:0">P</div>
<div class="r" style="left:1050px;top:204px;width:1px;height:18px;background:#d0dcd4;"></div>
<div class="t" style="left:883.00px;width:400px;text-align:center;top:208.14px;font-size:12px;line-height:12px;color:#f4f4f4;font-weight:400;-webkit-text-stroke:0">Q</div>
<div class="r" style="left:1114px;top:204px;width:1px;height:18px;background:#d0dcd4;"></div>
<div class="t" style="left:947.00px;width:400px;text-align:center;top:208.14px;font-size:12px;line-height:12px;color:#f4f4f4;font-weight:400;-webkit-text-stroke:0">R</div>
<div class="r" style="left:1178px;top:204px;width:1px;height:18px;background:#d0dcd4;"></div>
<div class="r" style="left:1px;top:224px;width:26px;height:483px;background:#217346;"></div>
<div class="r" style="left:27px;top:225px;width:1px;height:482px;background:#ffffff;"></div>
<div class="r" style="left:28px;top:225px;width:1159px;height:482px;background:#c6c6c6;"></div>
<div class="r" style="left:28px;top:224px;width:63px;height:19px;background:#ffffff;"></div>
<div class="r" style="left:90px;top:225px;width:1px;height:482px;background:#a9a9a9;"></div>
<div class="r" style="left:154px;top:225px;width:1px;height:482px;background:#a9a9a9;"></div>
<div class="r" style="left:218px;top:225px;width:1px;height:482px;background:#a9a9a9;"></div>
<div class="r" style="left:282px;top:225px;width:1px;height:482px;background:#a9a9a9;"></div>
<div class="r" style="left:346px;top:225px;width:1px;height:482px;background:#a9a9a9;"></div>
<div class="r" style="left:410px;top:225px;width:1px;height:482px;background:#a9a9a9;"></div>
<div class="r" style="left:474px;top:225px;width:1px;height:482px;background:#a9a9a9;"></div>
<div class="r" style="left:538px;top:225px;width:1px;height:482px;background:#a9a9a9;"></div>
<div class="r" style="left:602px;top:225px;width:1px;height:482px;background:#a9a9a9;"></div>
<div class="r" style="left:666px;top:225px;width:1px;height:482px;background:#a9a9a9;"></div>
<div class="r" style="left:730px;top:225px;width:1px;height:482px;background:#a9a9a9;"></div>
<div class="r" style="left:794px;top:225px;width:1px;height:482px;background:#a9a9a9;"></div>
<div class="r" style="left:858px;top:225px;width:1px;height:482px;background:#a9a9a9;"></div>
<div class="r" style="left:922px;top:225px;width:1px;height:482px;background:#a9a9a9;"></div>
<div class="r" style="left:986px;top:225px;width:1px;height:482px;background:#a9a9a9;"></div>
<div class="r" style="left:1050px;top:225px;width:1px;height:482px;background:#a9a9a9;"></div>
<div class="r" style="left:1114px;top:225px;width:1px;height:482px;background:#a9a9a9;"></div>
<div class="r" style="left:1178px;top:225px;width:1px;height:482px;background:#a9a9a9;"></div>
<div class="r" style="left:28px;top:243px;width:1159px;height:1px;background:#a9a9a9;"></div>
<div class="r" style="left:1px;top:243px;width:25px;height:1px;background:#c8d8cd;"></div>
<div class="r" style="left:28px;top:263px;width:1159px;height:1px;background:#a9a9a9;"></div>
<div class="r" style="left:1px;top:263px;width:25px;height:1px;background:#c8d8cd;"></div>
<div class="r" style="left:28px;top:283px;width:1159px;height:1px;background:#a9a9a9;"></div>
<div class="r" style="left:1px;top:283px;width:25px;height:1px;background:#c8d8cd;"></div>
<div class="r" style="left:28px;top:303px;width:1159px;height:1px;background:#a9a9a9;"></div>
<div class="r" style="left:1px;top:303px;width:25px;height:1px;background:#c8d8cd;"></div>
<div class="r" style="left:28px;top:323px;width:1159px;height:1px;background:#a9a9a9;"></div>
<div class="r" style="left:1px;top:323px;width:25px;height:1px;background:#c8d8cd;"></div>
<div class="r" style="left:28px;top:343px;width:1159px;height:1px;background:#a9a9a9;"></div>
<div class="r" style="left:1px;top:343px;width:25px;height:1px;background:#c8d8cd;"></div>
<div class="r" style="left:28px;top:363px;width:1159px;height:1px;background:#a9a9a9;"></div>
<div class="r" style="left:1px;top:363px;width:25px;height:1px;background:#c8d8cd;"></div>
<div class="r" style="left:28px;top:383px;width:1159px;height:1px;background:#a9a9a9;"></div>
<div class="r" style="left:1px;top:383px;width:25px;height:1px;background:#c8d8cd;"></div>
<div class="r" style="left:28px;top:403px;width:1159px;height:1px;background:#a9a9a9;"></div>
<div class="r" style="left:1px;top:403px;width:25px;height:1px;background:#c8d8cd;"></div>
<div class="r" style="left:28px;top:423px;width:1159px;height:1px;background:#a9a9a9;"></div>
<div class="r" style="left:1px;top:423px;width:25px;height:1px;background:#c8d8cd;"></div>
<div class="r" style="left:28px;top:443px;width:1159px;height:1px;background:#a9a9a9;"></div>
<div class="r" style="left:1px;top:443px;width:25px;height:1px;background:#c8d8cd;"></div>
<div class="r" style="left:28px;top:463px;width:1159px;height:1px;background:#a9a9a9;"></div>
<div class="r" style="left:1px;top:463px;width:25px;height:1px;background:#c8d8cd;"></div>
<div class="r" style="left:28px;top:483px;width:1159px;height:1px;background:#a9a9a9;"></div>
<div class="r" style="left:1px;top:483px;width:25px;height:1px;background:#c8d8cd;"></div>
<div class="r" style="left:28px;top:503px;width:1159px;height:1px;background:#a9a9a9;"></div>
<div class="r" style="left:1px;top:503px;width:25px;height:1px;background:#c8d8cd;"></div>
<div class="r" style="left:28px;top:523px;width:1159px;height:1px;background:#a9a9a9;"></div>
<div class="r" style="left:1px;top:523px;width:25px;height:1px;background:#c8d8cd;"></div>
<div class="r" style="left:28px;top:543px;width:1159px;height:1px;background:#a9a9a9;"></div>
<div class="r" style="left:1px;top:543px;width:25px;height:1px;background:#c8d8cd;"></div>
<div class="r" style="left:28px;top:563px;width:1159px;height:1px;background:#a9a9a9;"></div>
<div class="r" style="left:1px;top:563px;width:25px;height:1px;background:#c8d8cd;"></div>
<div class="r" style="left:28px;top:583px;width:1159px;height:1px;background:#a9a9a9;"></div>
<div class="r" style="left:1px;top:583px;width:25px;height:1px;background:#c8d8cd;"></div>
<div class="r" style="left:28px;top:603px;width:1159px;height:1px;background:#a9a9a9;"></div>
<div class="r" style="left:1px;top:603px;width:25px;height:1px;background:#c8d8cd;"></div>
<div class="r" style="left:28px;top:623px;width:1159px;height:1px;background:#a9a9a9;"></div>
<div class="r" style="left:1px;top:623px;width:25px;height:1px;background:#c8d8cd;"></div>
<div class="r" style="left:28px;top:643px;width:1159px;height:1px;background:#a9a9a9;"></div>
<div class="r" style="left:1px;top:643px;width:25px;height:1px;background:#c8d8cd;"></div>
<div class="r" style="left:28px;top:663px;width:1159px;height:1px;background:#a9a9a9;"></div>
<div class="r" style="left:1px;top:663px;width:25px;height:1px;background:#c8d8cd;"></div>
<div class="r" style="left:28px;top:683px;width:1159px;height:1px;background:#a9a9a9;"></div>
<div class="r" style="left:1px;top:683px;width:25px;height:1px;background:#c8d8cd;"></div>
<div class="r" style="left:28px;top:703px;width:1159px;height:1px;background:#a9a9a9;"></div>
<div class="r" style="left:1px;top:703px;width:25px;height:1px;background:#c8d8cd;"></div>
<div class="t" style="left:-186.50px;width:400px;text-align:center;top:229.29px;font-size:12.3px;line-height:12.3px;color:#f4f4f4;font-weight:400;-webkit-text-stroke:0">1</div>
<div class="t" style="left:-186.50px;width:400px;text-align:center;top:249.29px;font-size:12.3px;line-height:12.3px;color:#f4f4f4;font-weight:400;-webkit-text-stroke:0">2</div>
<div class="t" style="left:-186.50px;width:400px;text-align:center;top:269.29px;font-size:12.3px;line-height:12.3px;color:#f4f4f4;font-weight:400;-webkit-text-stroke:0">3</div>
<div class="t" style="left:-186.50px;width:400px;text-align:center;top:289.29px;font-size:12.3px;line-height:12.3px;color:#f4f4f4;font-weight:400;-webkit-text-stroke:0">4</div>
<div class="t" style="left:-186.50px;width:400px;text-align:center;top:309.29px;font-size:12.3px;line-height:12.3px;color:#f4f4f4;font-weight:400;-webkit-text-stroke:0">5</div>
<div class="t" style="left:-186.50px;width:400px;text-align:center;top:329.29px;font-size:12.3px;line-height:12.3px;color:#f4f4f4;font-weight:400;-webkit-text-stroke:0">6</div>
<div class="t" style="left:-186.50px;width:400px;text-align:center;top:349.29px;font-size:12.3px;line-height:12.3px;color:#f4f4f4;font-weight:400;-webkit-text-stroke:0">7</div>
<div class="t" style="left:-186.50px;width:400px;text-align:center;top:369.29px;font-size:12.3px;line-height:12.3px;color:#f4f4f4;font-weight:400;-webkit-text-stroke:0">8</div>
<div class="t" style="left:-186.50px;width:400px;text-align:center;top:389.29px;font-size:12.3px;line-height:12.3px;color:#f4f4f4;font-weight:400;-webkit-text-stroke:0">9</div>
<div class="t" style="left:-186.50px;width:400px;text-align:center;top:409.29px;font-size:12.3px;line-height:12.3px;color:#f4f4f4;font-weight:400;-webkit-text-stroke:0">10</div>
<div class="t" style="left:-186.50px;width:400px;text-align:center;top:429.29px;font-size:12.3px;line-height:12.3px;color:#f4f4f4;font-weight:400;-webkit-text-stroke:0">11</div>
<div class="t" style="left:-186.50px;width:400px;text-align:center;top:449.29px;font-size:12.3px;line-height:12.3px;color:#f4f4f4;font-weight:400;-webkit-text-stroke:0">12</div>
<div class="t" style="left:-186.50px;width:400px;text-align:center;top:469.29px;font-size:12.3px;line-height:12.3px;color:#f4f4f4;font-weight:400;-webkit-text-stroke:0">13</div>
<div class="t" style="left:-186.50px;width:400px;text-align:center;top:489.29px;font-size:12.3px;line-height:12.3px;color:#f4f4f4;font-weight:400;-webkit-text-stroke:0">14</div>
<div class="t" style="left:-186.50px;width:400px;text-align:center;top:509.29px;font-size:12.3px;line-height:12.3px;color:#f4f4f4;font-weight:400;-webkit-text-stroke:0">15</div>
<div class="t" style="left:-186.50px;width:400px;text-align:center;top:529.29px;font-size:12.3px;line-height:12.3px;color:#f4f4f4;font-weight:400;-webkit-text-stroke:0">16</div>
<div class="t" style="left:-186.50px;width:400px;text-align:center;top:549.29px;font-size:12.3px;line-height:12.3px;color:#f4f4f4;font-weight:400;-webkit-text-stroke:0">17</div>
<div class="t" style="left:-186.50px;width:400px;text-align:center;top:569.29px;font-size:12.3px;line-height:12.3px;color:#f4f4f4;font-weight:400;-webkit-text-stroke:0">18</div>
<div class="t" style="left:-186.50px;width:400px;text-align:center;top:589.29px;font-size:12.3px;line-height:12.3px;color:#f4f4f4;font-weight:400;-webkit-text-stroke:0">19</div>
<div class="t" style="left:-186.50px;width:400px;text-align:center;top:609.29px;font-size:12.3px;line-height:12.3px;color:#f4f4f4;font-weight:400;-webkit-text-stroke:0">20</div>
<div class="t" style="left:-186.50px;width:400px;text-align:center;top:629.29px;font-size:12.3px;line-height:12.3px;color:#f4f4f4;font-weight:400;-webkit-text-stroke:0">21</div>
<div class="t" style="left:-186.50px;width:400px;text-align:center;top:649.29px;font-size:12.3px;line-height:12.3px;color:#f4f4f4;font-weight:400;-webkit-text-stroke:0">22</div>
<div class="t" style="left:-186.50px;width:400px;text-align:center;top:669.29px;font-size:12.3px;line-height:12.3px;color:#f4f4f4;font-weight:400;-webkit-text-stroke:0">23</div>
<div class="t" style="left:-186.50px;width:400px;text-align:center;top:689.29px;font-size:12.3px;line-height:12.3px;color:#f4f4f4;font-weight:400;-webkit-text-stroke:0">24</div>
<div class="r g" style="left:28px;top:224px;width:1159px;height:483px;overflow:hidden">
<div class="t" style="left:2px;top:5.20px;width:61px;overflow:hidden;font-size:12.4px;line-height:12.4px;color:#000"><span style="letter-spacing:0.597px">DeclaratieBestand</span></div>
<div class="t" style="left:65px;top:5.20px;width:62px;overflow:hidden;font-size:12.4px;line-height:12.4px;color:#000"><span style="letter-spacing:0.646px">RetourBestand</span></div>
<div class="t" style="left:129px;top:5.20px;width:62px;overflow:hidden;font-size:12.4px;line-height:12.4px;color:#000"><span style="letter-spacing:0.621px">BerichtType</span></div>
<div class="t" style="left:193px;top:5.20px;width:62px;overflow:hidden;font-size:12.4px;line-height:12.4px;color:#000"><span style="letter-spacing:0.596px">BerichtCode</span></div>
<div class="t" style="left:257px;top:5.20px;width:62px;overflow:hidden;font-size:12.4px;line-height:12.4px;color:#000"><span style="letter-spacing:0.831px">BerichtOnderwerp</span></div>
<div class="t" style="left:321px;top:5.20px;width:62px;overflow:hidden;font-size:12.4px;line-height:12.4px;color:#000"><span style="letter-spacing:0.598px">BerichtVersie</span></div>
<div class="t" style="left:385px;top:5.20px;width:62px;overflow:hidden;font-size:12.4px;line-height:12.4px;color:#000"><span style="letter-spacing:0.544px">BerichtSubversie</span></div>
<div class="t" style="left:449px;top:5.20px;width:62px;overflow:hidden;font-size:12.4px;line-height:12.4px;color:#000"><span style="letter-spacing:0.690px">BerichtSoort</span></div>
<div class="t" style="left:513px;top:5.20px;width:62px;overflow:hidden;font-size:12.4px;line-height:12.4px;color:#000"><span style="letter-spacing:0.735px">BerichtSoftware</span></div>
<div class="t" style="left:577px;top:5.20px;width:62px;overflow:hidden;font-size:12.4px;line-height:12.4px;color:#000"><span style="letter-spacing:0.743px">FactuurDebiteur</span></div>
<div class="t" style="left:641px;top:5.20px;width:62px;overflow:hidden;font-size:12.4px;line-height:12.4px;color:#000"><span style="letter-spacing:0.742px">FactuurDebiteurNaam</span></div>
<div class="t" style="left:705px;top:5.20px;width:62px;overflow:hidden;font-size:12.4px;line-height:12.4px;color:#000"><span style="letter-spacing:0.688px">FactuurCrediteur</span></div>
<div class="t" style="left:769px;top:5.20px;width:62px;overflow:hidden;font-size:12.4px;line-height:12.4px;color:#000"><span style="letter-spacing:0.698px">FactuurCrediteurNaam</span></div>
<div class="t" style="left:833px;top:5.20px;width:62px;overflow:hidden;font-size:12.4px;line-height:12.4px;color:#000"><span style="letter-spacing:0.584px">FactuurPeriodeBegin</span></div>
<div class="t" style="left:897px;top:5.20px;width:62px;overflow:hidden;font-size:12.4px;line-height:12.4px;color:#000"><span style="letter-spacing:0.584px">FactuurPeriodeEind</span></div>
<div class="t" style="left:961px;top:5.20px;width:62px;overflow:hidden;font-size:12.4px;line-height:12.4px;color:#000"><span style="letter-spacing:0.787px">FactuurFactuurnummer</span></div>
<div class="t" style="left:1025px;top:5.20px;width:62px;overflow:hidden;font-size:12.4px;line-height:12.4px;color:#000"><span style="letter-spacing:0.615px">FactuurTotaal</span></div>
<div class="t" style="left:1089px;top:5.20px;width:62px;overflow:hidden;font-size:12.4px;line-height:12.4px;color:#000"><span style="letter-spacing:0.566px">FactuurBTW</span></div>
<div class="t" style="left:1153px;top:5.20px;width:62px;overflow:hidden;font-size:12.4px;line-height:12.4px;color:#000"><span style="letter-spacing:0.765px">FactuurDatum</span></div>
<div class="t" style="left:2px;top:25.20px;width:61px;overflow:hidden;font-size:12.4px;line-height:12.4px;color:#000"><span style="letter-spacing:1.025px">AW</span>319<span style="letter-spacing:0.574px">_</span>221001</div>
<div class="t" style="left:65px;top:25.20px;width:61px;overflow:hidden;font-size:12.4px;line-height:12.4px;color:#000"><span style="letter-spacing:0.989px">retour_</span>221001</div>
<div class="t" style="left:127px;top:25.20px;width:62px;text-align:right;font-size:12.4px;line-height:12.4px;color:#000"><span style="letter-spacing:0.3px;margin-right:-0.3px">187</span></div>
<div class="t" style="left:193px;top:25.20px;width:61px;overflow:hidden;font-size:12.4px;line-height:12.4px;color:#000"><span style="letter-spacing:1.025px">AW</span>319</div>
<div class="t" style="left:257px;top:25.20px;width:61px;overflow:hidden;font-size:12.4px;line-height:12.4px;color:#000"><span style="letter-spacing:0.167px">WLZ</span></div>
<div class="t" style="left:319px;top:25.20px;width:62px;text-align:right;font-size:12.4px;line-height:12.4px;color:#000"><span style="letter-spacing:0.3px;margin-right:-0.3px">1</span></div>
<div class="t" style="left:383px;top:25.20px;width:62px;text-align:right;font-size:12.4px;line-height:12.4px;color:#000"><span style="letter-spacing:0.3px;margin-right:-0.3px">4</span></div>
<div class="t" style="left:449px;top:25.20px;width:61px;overflow:hidden;font-size:12.4px;line-height:12.4px;color:#000"><span style="letter-spacing:-0.265px">T</span></div>
<div class="t" style="left:513px;top:25.20px;width:61px;overflow:hidden;font-size:12.4px;line-height:12.4px;color:#000"><span style="letter-spacing:-0.012px">VDLAAR</span></div>
<div class="t" style="left:575px;top:25.20px;width:62px;text-align:right;font-size:12.4px;line-height:12.4px;color:#000"><span style="letter-spacing:0.3px;margin-right:-0.3px">93906</span></div>
<div class="t" style="left:641px;top:25.20px;width:61px;overflow:hidden;font-size:12.4px;line-height:12.4px;color:#000"><span style="letter-spacing:0.638px">Zonneveeld</span></div>
<div class="t" style="left:703px;top:25.20px;width:62px;text-align:right;font-size:12.4px;line-height:12.4px;color:#000"><span style="letter-spacing:0.3px;margin-right:-0.3px">59058929</span></div>
<div class="t" style="left:769px;top:25.20px;width:61px;overflow:hidden;font-size:12.4px;line-height:12.4px;color:#000"><span style="letter-spacing:0.807px">MeerZorg</span></div>
<div class="t" style="left:834px;top:25.20px;width:61px;overflow:hidden;font-size:12.4px;line-height:12.4px;color:#000;letter-spacing:0.3px;-webkit-text-stroke:0.25px #000">########</div>
<div class="t" style="left:898px;top:25.20px;width:61px;overflow:hidden;font-size:12.4px;line-height:12.4px;color:#000;letter-spacing:0.3px;-webkit-text-stroke:0.25px #000">########</div>
<div class="t" style="left:959px;top:25.20px;width:62px;text-align:right;font-size:12.4px;line-height:12.4px;color:#000"><span style="letter-spacing:0.3px;margin-right:-0.3px">2212</span></div>
<div class="t" style="left:1023px;top:25.20px;width:62px;text-align:right;font-size:12.4px;line-height:12.4px;color:#000"><span style="letter-spacing:0.3px;margin-right:-0.3px">91859,06</span></div>
<div class="t" style="left:1087px;top:25.20px;width:62px;text-align:right;font-size:12.4px;line-height:12.4px;color:#000"><span style="letter-spacing:0.3px;margin-right:-0.3px">0</span></div>
<div class="t" style="left:2px;top:45.20px;width:61px;overflow:hidden;font-size:12.4px;line-height:12.4px;color:#000"><span style="letter-spacing:1.025px">AW</span>319<span style="letter-spacing:0.574px">_</span>221001</div>
<div class="t" style="left:65px;top:45.20px;width:61px;overflow:hidden;font-size:12.4px;line-height:12.4px;color:#000"><span style="letter-spacing:0.989px">retour_</span>221001</div>
<div class="t" style="left:127px;top:45.20px;width:62px;text-align:right;font-size:12.4px;line-height:12.4px;color:#000"><span style="letter-spacing:0.3px;margin-right:-0.3px">187</span></div>
<div class="t" style="left:193px;top:45.20px;width:61px;overflow:hidden;font-size:12.4px;line-height:12.4px;color:#000"><span style="letter-spacing:1.025px">AW</span>319</div>
<div class="t" style="left:257px;top:45.20px;width:61px;overflow:hidden;font-size:12.4px;line-height:12.4px;color:#000"><span style="letter-spacing:0.167px">WLZ</span></div>
<div class="t" style="left:319px;top:45.20px;width:62px;text-align:right;font-size:12.4px;line-height:12.4px;color:#000"><span style="letter-spacing:0.3px;margin-right:-0.3px">1</span></div>
<div class="t" style="left:383px;top:45.20px;width:62px;text-align:right;font-size:12.4px;line-height:12.4px;color:#000"><span style="letter-spacing:0.3px;margin-right:-0.3px">4</span></div>
<div class="t" style="left:449px;top:45.20px;width:61px;overflow:hidden;font-size:12.4px;line-height:12.4px;color:#000"><span style="letter-spacing:-0.265px">T</span></div>
<div class="t" style="left:513px;top:45.20px;width:61px;overflow:hidden;font-size:12.4px;line-height:12.4px;color:#000"><span style="letter-spacing:-0.012px">VDLAAR</span></div>
<div class="t" style="left:575px;top:45.20px;width:62px;text-align:right;font-size:12.4px;line-height:12.4px;color:#000"><span style="letter-spacing:0.3px;margin-right:-0.3px">93906</span></div>
<div class="t" style="left:641px;top:45.20px;width:61px;overflow:hidden;font-size:12.4px;line-height:12.4px;color:#000"><span style="letter-spacing:0.638px">Zonneveeld</span></div>
<div class="t" style="left:703px;top:45.20px;width:62px;text-align:right;font-size:12.4px;line-height:12.4px;color:#000"><span style="letter-spacing:0.3px;margin-right:-0.3px">59058929</span></div>
<div class="t" style="left:769px;top:45.20px;width:61px;overflow:hidden;font-size:12.4px;line-height:12.4px;color:#000"><span style="letter-spacing:0.807px">MeerZorg</span></div>
<div class="t" style="left:834px;top:45.20px;width:61px;overflow:hidden;font-size:12.4px;line-height:12.4px;color:#000;letter-spacing:0.3px;-webkit-text-stroke:0.25px #000">########</div>
<div class="t" style="left:898px;top:45.20px;width:61px;overflow:hidden;font-size:12.4px;line-height:12.4px;color:#000;letter-spacing:0.3px;-webkit-text-stroke:0.25px #000">########</div>
<div class="t" style="left:959px;top:45.20px;width:62px;text-align:right;font-size:12.4px;line-height:12.4px;color:#000"><span style="letter-spacing:0.3px;margin-right:-0.3px">2212</span></div>
<div class="t" style="left:1023px;top:45.20px;width:62px;text-align:right;font-size:12.4px;line-height:12.4px;color:#000"><span style="letter-spacing:0.3px;margin-right:-0.3px">91859,06</span></div>
<div class="t" style="left:1087px;top:45.20px;width:62px;text-align:right;font-size:12.4px;line-height:12.4px;color:#000"><span style="letter-spacing:0.3px;margin-right:-0.3px">0</span></div>
<div class="t" style="left:2px;top:65.20px;width:61px;overflow:hidden;font-size:12.4px;line-height:12.4px;color:#000"><span style="letter-spacing:1.025px">AW</span>319<span style="letter-spacing:0.574px">_</span>221001</div>
<div class="t" style="left:65px;top:65.20px;width:61px;overflow:hidden;font-size:12.4px;line-height:12.4px;color:#000"><span style="letter-spacing:0.989px">retour_</span>221001</div>
<div class="t" style="left:127px;top:65.20px;width:62px;text-align:right;font-size:12.4px;line-height:12.4px;color:#000"><span style="letter-spacing:0.3px;margin-right:-0.3px">187</span></div>
<div class="t" style="left:193px;top:65.20px;width:61px;overflow:hidden;font-size:12.4px;line-height:12.4px;color:#000"><span style="letter-spacing:1.025px">AW</span>319</div>
<div class="t" style="left:257px;top:65.20px;width:61px;overflow:hidden;font-size:12.4px;line-height:12.4px;color:#000"><span style="letter-spacing:0.167px">WLZ</span></div>
<div class="t" style="left:319px;top:65.20px;width:62px;text-align:right;font-size:12.4px;line-height:12.4px;color:#000"><span style="letter-spacing:0.3px;margin-right:-0.3px">1</span></div>
<div class="t" style="left:383px;top:65.20px;width:62px;text-align:right;font-size:12.4px;line-height:12.4px;color:#000"><span style="letter-spacing:0.3px;margin-right:-0.3px">4</span></div>
<div class="t" style="left:449px;top:65.20px;width:61px;overflow:hidden;font-size:12.4px;line-height:12.4px;color:#000"><span style="letter-spacing:-0.265px">T</span></div>
<div class="t" style="left:513px;top:65.20px;width:61px;overflow:hidden;font-size:12.4px;line-height:12.4px;color:#000"><span style="letter-spacing:-0.012px">VDLAAR</span></div>
<div class="t" style="left:575px;top:65.20px;width:62px;text-align:right;font-size:12.4px;line-height:12.4px;color:#000"><span style="letter-spacing:0.3px;margin-right:-0.3px">93906</span></div>
<div class="t" style="left:641px;top:65.20px;width:61px;overflow:hidden;font-size:12.4px;line-height:12.4px;color:#000"><span style="letter-spacing:0.638px">Zonneveeld</span></div>
<div class="t" style="left:703px;top:65.20px;width:62px;text-align:right;font-size:12.4px;line-height:12.4px;color:#000"><span style="letter-spacing:0.3px;margin-right:-0.3px">59058929</span></div>
<div class="t" style="left:769px;top:65.20px;width:61px;overflow:hidden;font-size:12.4px;line-height:12.4px;color:#000"><span style="letter-spacing:0.807px">MeerZorg</span></div>
<div class="t" style="left:834px;top:65.20px;width:61px;overflow:hidden;font-size:12.4px;line-height:12.4px;color:#000;letter-spacing:0.3px;-webkit-text-stroke:0.25px #000">########</div>
<div class="t" style="left:898px;top:65.20px;width:61px;overflow:hidden;font-size:12.4px;line-height:12.4px;color:#000;letter-spacing:0.3px;-webkit-text-stroke:0.25px #000">########</div>
<div class="t" style="left:959px;top:65.20px;width:62px;text-align:right;font-size:12.4px;line-height:12.4px;color:#000"><span style="letter-spacing:0.3px;margin-right:-0.3px">2212</span></div>
<div class="t" style="left:1023px;top:65.20px;width:62px;text-align:right;font-size:12.4px;line-height:12.4px;color:#000"><span style="letter-spacing:0.3px;margin-right:-0.3px">91859,06</span></div>
<div class="t" style="left:1087px;top:65.20px;width:62px;text-align:right;font-size:12.4px;line-height:12.4px;color:#000"><span style="letter-spacing:0.3px;margin-right:-0.3px">0</span></div>
<div class="t" style="left:2px;top:85.20px;width:61px;overflow:hidden;font-size:12.4px;line-height:12.4px;color:#000"><span style="letter-spacing:1.025px">AW</span>319<span style="letter-spacing:0.574px">_</span>221001</div>
<div class="t" style="left:65px;top:85.20px;width:61px;overflow:hidden;font-size:12.4px;line-height:12.4px;color:#000"><span style="letter-spacing:0.989px">retour_</span>221001</div>
<div class="t" style="left:127px;top:85.20px;width:62px;text-align:right;font-size:12.4px;line-height:12.4px;color:#000"><span style="letter-spacing:0.3px;margin-right:-0.3px">187</span></div>
<div class="t" style="left:193px;top:85.20px;width:61px;overflow:hidden;font-size:12.4px;line-height:12.4px;color:#000"><span style="letter-spacing:1.025px">AW</span>319</div>
<div class="t" style="left:257px;top:85.20px;width:61px;overflow:hidden;font-size:12.4px;line-height:12.4px;color:#000"><span style="letter-spacing:0.167px">WLZ</span></div>
<div class="t" style="left:319px;top:85.20px;width:62px;text-align:right;font-size:12.4px;line-height:12.4px;color:#000"><span style="letter-spacing:0.3px;margin-right:-0.3px">1</span></div>
<div class="t" style="left:383px;top:85.20px;width:62px;text-align:right;font-size:12.4px;line-height:12.4px;color:#000"><span style="letter-spacing:0.3px;margin-right:-0.3px">4</span></div>
<div class="t" style="left:449px;top:85.20px;width:61px;overflow:hidden;font-size:12.4px;line-height:12.4px;color:#000"><span style="letter-spacing:-0.265px">T</span></div>
<div class="t" style="left:513px;top:85.20px;width:61px;overflow:hidden;font-size:12.4px;line-height:12.4px;color:#000"><span style="letter-spacing:-0.012px">VDLAAR</span></div>
<div class="t" style="left:575px;top:85.20px;width:62px;text-align:right;font-size:12.4px;line-height:12.4px;color:#000"><span style="letter-spacing:0.3px;margin-right:-0.3px">93906</span></div>
<div class="t" style="left:641px;top:85.20px;width:61px;overflow:hidden;font-size:12.4px;line-height:12.4px;color:#000"><span style="letter-spacing:0.638px">Zonneveeld</span></div>
<div class="t" style="left:703px;top:85.20px;width:62px;text-align:right;font-size:12.4px;line-height:12.4px;color:#000"><span style="letter-spacing:0.3px;margin-right:-0.3px">59058929</span></div>
<div class="t" style="left:769px;top:85.20px;width:61px;overflow:hidden;font-size:12.4px;line-height:12.4px;color:#000"><span style="letter-spacing:0.807px">MeerZorg</span></div>
<div class="t" style="left:834px;top:85.20px;width:61px;overflow:hidden;font-size:12.4px;line-height:12.4px;color:#000;letter-spacing:0.3px;-webkit-text-stroke:0.25px #000">########</div>
<div class="t" style="left:898px;top:85.20px;width:61px;overflow:hidden;font-size:12.4px;line-height:12.4px;color:#000;letter-spacing:0.3px;-webkit-text-stroke:0.25px #000">########</div>
<div class="t" style="left:959px;top:85.20px;width:62px;text-align:right;font-size:12.4px;line-height:12.4px;color:#000"><span style="letter-spacing:0.3px;margin-right:-0.3px">2212</span></div>
<div class="t" style="left:1023px;top:85.20px;width:62px;text-align:right;font-size:12.4px;line-height:12.4px;color:#000"><span style="letter-spacing:0.3px;margin-right:-0.3px">91859,06</span></div>
<div class="t" style="left:1087px;top:85.20px;width:62px;text-align:right;font-size:12.4px;line-height:12.4px;color:#000"><span style="letter-spacing:0.3px;margin-right:-0.3px">0</span></div>
<div class="t" style="left:2px;top:105.20px;width:61px;overflow:hidden;font-size:12.4px;line-height:12.4px;color:#000"><span style="letter-spacing:1.025px">AW</span>319<span style="letter-spacing:0.574px">_</span>221001</div>
<div class="t" style="left:65px;top:105.20px;width:61px;overflow:hidden;font-size:12.4px;line-height:12.4px;color:#000"><span style="letter-spacing:0.989px">retour_</span>221001</div>
<div class="t" style="left:127px;top:105.20px;width:62px;text-align:right;font-size:12.4px;line-height:12.4px;color:#000"><span style="letter-spacing:0.3px;margin-right:-0.3px">187</span></div>
<div class="t" style="left:193px;top:105.20px;width:61px;overflow:hidden;font-size:12.4px;line-height:12.4px;color:#000"><span style="letter-spacing:1.025px">AW</span>319</div>
<div class="t" style="left:257px;top:105.20px;width:61px;overflow:hidden;font-size:12.4px;line-height:12.4px;color:#000"><span style="letter-spacing:0.167px">WLZ</span></div>
<div class="t" style="left:319px;top:105.20px;width:62px;text-align:right;font-size:12.4px;line-height:12.4px;color:#000"><span style="letter-spacing:0.3px;margin-right:-0.3px">1</span></div>
<div class="t" style="left:383px;top:105.20px;width:62px;text-align:right;font-size:12.4px;line-height:12.4px;color:#000"><span style="letter-spacing:0.3px;margin-right:-0.3px">4</span></div>
<div class="t" style="left:449px;top:105.20px;width:61px;overflow:hidden;font-size:12.4px;line-height:12.4px;color:#000"><span style="letter-spacing:-0.265px">T</span></div>
<div class="t" style="left:513px;top:105.20px;width:61px;overflow:hidden;font-size:12.4px;line-height:12.4px;color:#000"><span style="letter-spacing:-0.012px">VDLAAR</span></div>
<div class="t" style="left:575px;top:105.20px;width:62px;text-align:right;font-size:12.4px;line-height:12.4px;color:#000"><span style="letter-spacing:0.3px;margin-right:-0.3px">93906</span></div>
<div class="t" style="left:641px;top:105.20px;width:61px;overflow:hidden;font-size:12.4px;line-height:12.4px;color:#000"><span style="letter-spacing:0.638px">Zonneveeld</span></div>
<div class="t" style="left:703px;top:105.20px;width:62px;text-align:right;font-size:12.4px;line-height:12.4px;color:#000"><span style="letter-spacing:0.3px;margin-right:-0.3px">59058929</span></div>
<div class="t" style="left:769px;top:105.20px;width:61px;overflow:hidden;font-size:12.4px;line-height:12.4px;color:#000"><span style="letter-spacing:0.807px">MeerZorg</span></div>
<div class="t" style="left:834px;top:105.20px;width:61px;overflow:hidden;font-size:12.4px;line-height:12.4px;color:#000;letter-spacing:0.3px;-webkit-text-stroke:0.25px #000">########</div>
<div class="t" style="left:898px;top:105.20px;width:61px;overflow:hidden;font-size:12.4px;line-height:12.4px;color:#000;letter-spacing:0.3px;-webkit-text-stroke:0.25px #000">########</div>
<div class="t" style="left:959px;top:105.20px;width:62px;text-align:right;font-size:12.4px;line-height:12.4px;color:#000"><span style="letter-spacing:0.3px;margin-right:-0.3px">2212</span></div>
<div class="t" style="left:1023px;top:105.20px;width:62px;text-align:right;font-size:12.4px;line-height:12.4px;color:#000"><span style="letter-spacing:0.3px;margin-right:-0.3px">91859,06</span></div>
<div class="t" style="left:1087px;top:105.20px;width:62px;text-align:right;font-size:12.4px;line-height:12.4px;color:#000"><span style="letter-spacing:0.3px;margin-right:-0.3px">0</span></div>
<div class="t" style="left:2px;top:125.20px;width:61px;overflow:hidden;font-size:12.4px;line-height:12.4px;color:#000"><span style="letter-spacing:1.025px">AW</span>319<span style="letter-spacing:0.574px">_</span>221001</div>
<div class="t" style="left:65px;top:125.20px;width:61px;overflow:hidden;font-size:12.4px;line-height:12.4px;color:#000"><span style="letter-spacing:0.989px">retour_</span>221001</div>
<div class="t" style="left:127px;top:125.20px;width:62px;text-align:right;font-size:12.4px;line-height:12.4px;color:#000"><span style="letter-spacing:0.3px;margin-right:-0.3px">187</span></div>
<div class="t" style="left:193px;top:125.20px;width:61px;overflow:hidden;font-size:12.4px;line-height:12.4px;color:#000"><span style="letter-spacing:1.025px">AW</span>319</div>
<div class="t" style="left:257px;top:125.20px;width:61px;overflow:hidden;font-size:12.4px;line-height:12.4px;color:#000"><span style="letter-spacing:0.167px">WLZ</span></div>
<div class="t" style="left:319px;top:125.20px;width:62px;text-align:right;font-size:12.4px;line-height:12.4px;color:#000"><span style="letter-spacing:0.3px;margin-right:-0.3px">1</span></div>
<div class="t" style="left:383px;top:125.20px;width:62px;text-align:right;font-size:12.4px;line-height:12.4px;color:#000"><span style="letter-spacing:0.3px;margin-right:-0.3px">4</span></div>
<div class="t" style="left:449px;top:125.20px;width:61px;overflow:hidden;font-size:12.4px;line-height:12.4px;color:#000"><span style="letter-spacing:-0.265px">T</span></div>
<div class="t" style="left:513px;top:125.20px;width:61px;overflow:hidden;font-size:12.4px;line-height:12.4px;color:#000"><span style="letter-spacing:-0.012px">VDLAAR</span></div>
<div class="t" style="left:575px;top:125.20px;width:62px;text-align:right;font-size:12.4px;line-height:12.4px;color:#000"><span style="letter-spacing:0.3px;margin-right:-0.3px">93906</span></div>
<div class="t" style="left:641px;top:125.20px;width:61px;overflow:hidden;font-size:12.4px;line-height:12.4px;color:#000"><span style="letter-spacing:0.638px">Zonneveeld</span></div>
<div class="t" style="left:703px;top:125.20px;width:62px;text-align:right;font-size:12.4px;line-height:12.4px;color:#000"><span style="letter-spacing:0.3px;margin-right:-0.3px">59058929</span></div>
<div class="t" style="left:769px;top:125.20px;width:61px;overflow:hidden;font-size:12.4px;line-height:12.4px;color:#000"><span style="letter-spacing:0.807px">MeerZorg</span></div>
<div class="t" style="left:834px;top:125.20px;width:61px;overflow:hidden;font-size:12.4px;line-height:12.4px;color:#000;letter-spacing:0.3px;-webkit-text-stroke:0.25px #000">########</div>
<div class="t" style="left:898px;top:125.20px;width:61px;overflow:hidden;font-size:12.4px;line-height:12.4px;color:#000;letter-spacing:0.3px;-webkit-text-stroke:0.25px #000">########</div>
<div class="t" style="left:959px;top:125.20px;width:62px;text-align:right;font-size:12.4px;line-height:12.4px;color:#000"><span style="letter-spacing:0.3px;margin-right:-0.3px">2212</span></div>
<div class="t" style="left:1023px;top:125.20px;width:62px;text-align:right;font-size:12.4px;line-height:12.4px;color:#000"><span style="letter-spacing:0.3px;margin-right:-0.3px">91859,06</span></div>
<div class="t" style="left:1087px;top:125.20px;width:62px;text-align:right;font-size:12.4px;line-height:12.4px;color:#000"><span style="letter-spacing:0.3px;margin-right:-0.3px">0</span></div>
<div class="t" style="left:2px;top:145.20px;width:61px;overflow:hidden;font-size:12.4px;line-height:12.4px;color:#000"><span style="letter-spacing:1.025px">AW</span>319<span style="letter-spacing:0.574px">_</span>221001</div>
<div class="t" style="left:65px;top:145.20px;width:61px;overflow:hidden;font-size:12.4px;line-height:12.4px;color:#000"><span style="letter-spacing:0.989px">retour_</span>221001</div>
<div class="t" style="left:127px;top:145.20px;width:62px;text-align:right;font-size:12.4px;line-height:12.4px;color:#000"><span style="letter-spacing:0.3px;margin-right:-0.3px">187</span></div>
<div class="t" style="left:193px;top:145.20px;width:61px;overflow:hidden;font-size:12.4px;line-height:12.4px;color:#000"><span style="letter-spacing:1.025px">AW</span>319</div>
<div class="t" style="left:257px;top:145.20px;width:61px;overflow:hidden;font-size:12.4px;line-height:12.4px;color:#000"><span style="letter-spacing:0.167px">WLZ</span></div>
<div class="t" style="left:319px;top:145.20px;width:62px;text-align:right;font-size:12.4px;line-height:12.4px;color:#000"><span style="letter-spacing:0.3px;margin-right:-0.3px">1</span></div>
<div class="t" style="left:383px;top:145.20px;width:62px;text-align:right;font-size:12.4px;line-height:12.4px;color:#000"><span style="letter-spacing:0.3px;margin-right:-0.3px">4</span></div>
<div class="t" style="left:449px;top:145.20px;width:61px;overflow:hidden;font-size:12.4px;line-height:12.4px;color:#000"><span style="letter-spacing:-0.265px">T</span></div>
<div class="t" style="left:513px;top:145.20px;width:61px;overflow:hidden;font-size:12.4px;line-height:12.4px;color:#000"><span style="letter-spacing:-0.012px">VDLAAR</span></div>
<div class="t" style="left:575px;top:145.20px;width:62px;text-align:right;font-size:12.4px;line-height:12.4px;color:#000"><span style="letter-spacing:0.3px;margin-right:-0.3px">93906</span></div>
<div class="t" style="left:641px;top:145.20px;width:61px;overflow:hidden;font-size:12.4px;line-height:12.4px;color:#000"><span style="letter-spacing:0.638px">Zonneveeld</span></div>
<div class="t" style="left:703px;top:145.20px;width:62px;text-align:right;font-size:12.4px;line-height:12.4px;color:#000"><span style="letter-spacing:0.3px;margin-right:-0.3px">59058929</span></div>
<div class="t" style="left:769px;top:145.20px;width:61px;overflow:hidden;font-size:12.4px;line-height:12.4px;color:#000"><span style="letter-spacing:0.807px">MeerZorg</span></div>
<div class="t" style="left:834px;top:145.20px;width:61px;overflow:hidden;font-size:12.4px;line-height:12.4px;color:#000;letter-spacing:0.3px;-webkit-text-stroke:0.25px #000">########</div>
<div class="t" style="left:898px;top:145.20px;width:61px;overflow:hidden;font-size:12.4px;line-height:12.4px;color:#000;letter-spacing:0.3px;-webkit-text-stroke:0.25px #000">########</div>
<div class="t" style="left:959px;top:145.20px;width:62px;text-align:right;font-size:12.4px;line-height:12.4px;color:#000"><span style="letter-spacing:0.3px;margin-right:-0.3px">2212</span></div>
<div class="t" style="left:1023px;top:145.20px;width:62px;text-align:right;font-size:12.4px;line-height:12.4px;color:#000"><span style="letter-spacing:0.3px;margin-right:-0.3px">91859,06</span></div>
<div class="t" style="left:1087px;top:145.20px;width:62px;text-align:right;font-size:12.4px;line-height:12.4px;color:#000"><span style="letter-spacing:0.3px;margin-right:-0.3px">0</span></div>
<div class="t" style="left:2px;top:165.20px;width:61px;overflow:hidden;font-size:12.4px;line-height:12.4px;color:#000"><span style="letter-spacing:1.025px">AW</span>319<span style="letter-spacing:0.574px">_</span>221001</div>
<div class="t" style="left:65px;top:165.20px;width:61px;overflow:hidden;font-size:12.4px;line-height:12.4px;color:#000"><span style="letter-spacing:0.989px">retour_</span>221001</div>
<div class="t" style="left:127px;top:165.20px;width:62px;text-align:right;font-size:12.4px;line-height:12.4px;color:#000"><span style="letter-spacing:0.3px;margin-right:-0.3px">187</span></div>
<div class="t" style="left:193px;top:165.20px;width:61px;overflow:hidden;font-size:12.4px;line-height:12.4px;color:#000"><span style="letter-spacing:1.025px">AW</span>319</div>
<div class="t" style="left:257px;top:165.20px;width:61px;overflow:hidden;font-size:12.4px;line-height:12.4px;color:#000"><span style="letter-spacing:0.167px">WLZ</span></div>
<div class="t" style="left:319px;top:165.20px;width:62px;text-align:right;font-size:12.4px;line-height:12.4px;color:#000"><span style="letter-spacing:0.3px;margin-right:-0.3px">1</span></div>
<div class="t" style="left:383px;top:165.20px;width:62px;text-align:right;font-size:12.4px;line-height:12.4px;color:#000"><span style="letter-spacing:0.3px;margin-right:-0.3px">4</span></div>
<div class="t" style="left:449px;top:165.20px;width:61px;overflow:hidden;font-size:12.4px;line-height:12.4px;color:#000"><span style="letter-spacing:-0.265px">T</span></div>
<div class="t" style="left:513px;top:165.20px;width:61px;overflow:hidden;font-size:12.4px;line-height:12.4px;color:#000"><span style="letter-spacing:-0.012px">VDLAAR</span></div>
<div class="t" style="left:575px;top:165.20px;width:62px;text-align:right;font-size:12.4px;line-height:12.4px;color:#000"><span style="letter-spacing:0.3px;margin-right:-0.3px">93906</span></div>
<div class="t" style="left:641px;top:165.20px;width:61px;overflow:hidden;font-size:12.4px;line-height:12.4px;color:#000"><span style="letter-spacing:0.638px">Zonneveeld</span></div>
<div class="t" style="left:703px;top:165.20px;width:62px;text-align:right;font-size:12.4px;line-height:12.4px;color:#000"><span style="letter-spacing:0.3px;margin-right:-0.3px">59058929</span></div>
<div class="t" style="left:769px;top:165.20px;width:61px;overflow:hidden;font-size:12.4px;line-height:12.4px;color:#000"><span style="letter-spacing:0.807px">MeerZorg</span></div>
<div class="t" style="left:834px;top:165.20px;width:61px;overflow:hidden;font-size:12.4px;line-height:12.4px;color:#000;letter-spacing:0.3px;-webkit-text-stroke:0.25px #000">########</div>
<div class="t" style="left:898px;top:165.20px;width:61px;overflow:hidden;font-size:12.4px;line-height:12.4px;color:#000;letter-spacing:0.3px;-webkit-text-stroke:0.25px #000">########</div>
<div class="t" style="left:959px;top:165.20px;width:62px;text-align:right;font-size:12.4px;line-height:12.4px;color:#000"><span style="letter-spacing:0.3px;margin-right:-0.3px">2212</span></div>
<div class="t" style="left:1023px;top:165.20px;width:62px;text-align:right;font-size:12.4px;line-height:12.4px;color:#000"><span style="letter-spacing:0.3px;margin-right:-0.3px">91859,06</span></div>
<div class="t" style="left:1087px;top:165.20px;width:62px;text-align:right;font-size:12.4px;line-height:12.4px;color:#000"><span style="letter-spacing:0.3px;margin-right:-0.3px">0</span></div>
<div class="t" style="left:2px;top:185.20px;width:61px;overflow:hidden;font-size:12.4px;line-height:12.4px;color:#000"><span style="letter-spacing:1.025px">AW</span>319<span style="letter-spacing:0.574px">_</span>221001</div>
<div class="t" style="left:65px;top:185.20px;width:61px;overflow:hidden;font-size:12.4px;line-height:12.4px;color:#000"><span style="letter-spacing:0.989px">retour_</span>221001</div>
<div class="t" style="left:127px;top:185.20px;width:62px;text-align:right;font-size:12.4px;line-height:12.4px;color:#000"><span style="letter-spacing:0.3px;margin-right:-0.3px">187</span></div>
<div class="t" style="left:193px;top:185.20px;width:61px;overflow:hidden;font-size:12.4px;line-height:12.4px;color:#000"><span style="letter-spacing:1.025px">AW</span>319</div>
<div class="t" style="left:257px;top:185.20px;width:61px;overflow:hidden;font-size:12.4px;line-height:12.4px;color:#000"><span style="letter-spacing:0.167px">WLZ</span></div>
<div class="t" style="left:319px;top:185.20px;width:62px;text-align:right;font-size:12.4px;line-height:12.4px;color:#000"><span style="letter-spacing:0.3px;margin-right:-0.3px">1</span></div>
<div class="t" style="left:383px;top:185.20px;width:62px;text-align:right;font-size:12.4px;line-height:12.4px;color:#000"><span style="letter-spacing:0.3px;margin-right:-0.3px">4</span></div>
<div class="t" style="left:449px;top:185.20px;width:61px;overflow:hidden;font-size:12.4px;line-height:12.4px;color:#000"><span style="letter-spacing:-0.265px">T</span></div>
<div class="t" style="left:513px;top:185.20px;width:61px;overflow:hidden;font-size:12.4px;line-height:12.4px;color:#000"><span style="letter-spacing:-0.012px">VDLAAR</span></div>
<div class="t" style="left:575px;top:185.20px;width:62px;text-align:right;font-size:12.4px;line-height:12.4px;color:#000"><span style="letter-spacing:0.3px;margin-right:-0.3px">93906</span></div>
<div class="t" style="left:641px;top:185.20px;width:61px;overflow:hidden;font-size:12.4px;line-height:12.4px;color:#000"><span style="letter-spacing:0.638px">Zonneveeld</span></div>
<div class="t" style="left:703px;top:185.20px;width:62px;text-align:right;font-size:12.4px;line-height:12.4px;color:#000"><span style="letter-spacing:0.3px;margin-right:-0.3px">59058929</span></div>
<div class="t" style="left:769px;top:185.20px;width:61px;overflow:hidden;font-size:12.4px;line-height:12.4px;color:#000"><span style="letter-spacing:0.807px">MeerZorg</span></div>
<div class="t" style="left:834px;top:185.20px;width:61px;overflow:hidden;font-size:12.4px;line-height:12.4px;color:#000;letter-spacing:0.3px;-webkit-text-stroke:0.25px #000">########</div>
<div class="t" style="left:898px;top:185.20px;width:61px;overflow:hidden;font-size:12.4px;line-height:12.4px;color:#000;letter-spacing:0.3px;-webkit-text-stroke:0.25px #000">########</div>
<div class="t" style="left:959px;top:185.20px;width:62px;text-align:right;font-size:12.4px;line-height:12.4px;color:#000"><span style="letter-spacing:0.3px;margin-right:-0.3px">2212</span></div>
<div class="t" style="left:1023px;top:185.20px;width:62px;text-align:right;font-size:12.4px;line-height:12.4px;color:#000"><span style="letter-spacing:0.3px;margin-right:-0.3px">91859,06</span></div>
<div class="t" style="left:1087px;top:185.20px;width:62px;text-align:right;font-size:12.4px;line-height:12.4px;color:#000"><span style="letter-spacing:0.3px;margin-right:-0.3px">0</span></div>
<div class="t" style="left:2px;top:205.20px;width:61px;overflow:hidden;font-size:12.4px;line-height:12.4px;color:#000"><span style="letter-spacing:1.025px">AW</span>319<span style="letter-spacing:0.574px">_</span>221001</div>
<div class="t" style="left:65px;top:205.20px;width:61px;overflow:hidden;font-size:12.4px;line-height:12.4px;color:#000"><span style="letter-spacing:0.989px">retour_</span>221001</div>
<div class="t" style="left:127px;top:205.20px;width:62px;text-align:right;font-size:12.4px;line-height:12.4px;color:#000"><span style="letter-spacing:0.3px;margin-right:-0.3px">187</span></div>
<div class="t" style="left:193px;top:205.20px;width:61px;overflow:hidden;font-size:12.4px;line-height:12.4px;color:#000"><span style="letter-spacing:1.025px">AW</span>319</div>
<div class="t" style="left:257px;top:205.20px;width:61px;overflow:hidden;font-size:12.4px;line-height:12.4px;color:#000"><span style="letter-spacing:0.167px">WLZ</span></div>
<div class="t" style="left:319px;top:205.20px;width:62px;text-align:right;font-size:12.4px;line-height:12.4px;color:#000"><span style="letter-spacing:0.3px;margin-right:-0.3px">1</span></div>
<div class="t" style="left:383px;top:205.20px;width:62px;text-align:right;font-size:12.4px;line-height:12.4px;color:#000"><span style="letter-spacing:0.3px;margin-right:-0.3px">4</span></div>
<div class="t" style="left:449px;top:205.20px;width:61px;overflow:hidden;font-size:12.4px;line-height:12.4px;color:#000"><span style="letter-spacing:-0.265px">T</span></div>
<div class="t" style="left:513px;top:205.20px;width:61px;overflow:hidden;font-size:12.4px;line-height:12.4px;color:#000"><span style="letter-spacing:-0.012px">VDLAAR</span></div>
<div class="t" style="left:575px;top:205.20px;width:62px;text-align:right;font-size:12.4px;line-height:12.4px;color:#000"><span style="letter-spacing:0.3px;margin-right:-0.3px">93906</span></div>
<div class="t" style="left:641px;top:205.20px;width:61px;overflow:hidden;font-size:12.4px;line-height:12.4px;color:#000"><span style="letter-spacing:0.638px">Zonneveeld</span></div>
<div class="t" style="left:703px;top:205.20px;width:62px;text-align:right;font-size:12.4px;line-height:12.4px;color:#000"><span style="letter-spacing:0.3px;margin-right:-0.3px">59058929</span></div>
<div class="t" style="left:769px;top:205.20px;width:61px;overflow:hidden;font-size:12.4px;line-height:12.4px;color:#000"><span style="letter-spacing:0.807px">MeerZorg</span></div>
<div class="t" style="left:834px;top:205.20px;width:61px;overflow:hidden;font-size:12.4px;line-height:12.4px;color:#000;letter-spacing:0.3px;-webkit-text-stroke:0.25px #000">########</div>
<div class="t" style="left:898px;top:205.20px;width:61px;overflow:hidden;font-size:12.4px;line-height:12.4px;color:#000;letter-spacing:0.3px;-webkit-text-stroke:0.25px #000">########</div>
<div class="t" style="left:959px;top:205.20px;width:62px;text-align:right;font-size:12.4px;line-height:12.4px;color:#000"><span style="letter-spacing:0.3px;margin-right:-0.3px">2212</span></div>
<div class="t" style="left:1023px;top:205.20px;width:62px;text-align:right;font-size:12.4px;line-height:12.4px;color:#000"><span style="letter-spacing:0.3px;margin-right:-0.3px">91859,06</span></div>
<div class="t" style="left:1087px;top:205.20px;width:62px;text-align:right;font-size:12.4px;line-height:12.4px;color:#000"><span style="letter-spacing:0.3px;margin-right:-0.3px">0</span></div>
<div class="t" style="left:2px;top:225.20px;width:61px;overflow:hidden;font-size:12.4px;line-height:12.4px;color:#000"><span style="letter-spacing:1.025px">AW</span>319<span style="letter-spacing:0.574px">_</span>221001</div>
<div class="t" style="left:65px;top:225.20px;width:61px;overflow:hidden;font-size:12.4px;line-height:12.4px;color:#000"><span style="letter-spacing:0.989px">retour_</span>221001</div>
<div class="t" style="left:127px;top:225.20px;width:62px;text-align:right;font-size:12.4px;line-height:12.4px;color:#000"><span style="letter-spacing:0.3px;margin-right:-0.3px">187</span></div>
<div class="t" style="left:193px;top:225.20px;width:61px;overflow:hidden;font-size:12.4px;line-height:12.4px;color:#000"><span style="letter-spacing:1.025px">AW</span>319</div>
<div class="t" style="left:257px;top:225.20px;width:61px;overflow:hidden;font-size:12.4px;line-height:12.4px;color:#000"><span style="letter-spacing:0.167px">WLZ</span></div>
<div class="t" style="left:319px;top:225.20px;width:62px;text-align:right;font-size:12.4px;line-height:12.4px;color:#000"><span style="letter-spacing:0.3px;margin-right:-0.3px">1</span></div>
<div class="t" style="left:383px;top:225.20px;width:62px;text-align:right;font-size:12.4px;line-height:12.4px;color:#000"><span style="letter-spacing:0.3px;margin-right:-0.3px">4</span></div>
<div class="t" style="left:449px;top:225.20px;width:61px;overflow:hidden;font-size:12.4px;line-height:12.4px;color:#000"><span style="letter-spacing:-0.265px">T</span></div>
<div class="t" style="left:513px;top:225.20px;width:61px;overflow:hidden;font-size:12.4px;line-height:12.4px;color:#000"><span style="letter-spacing:-0.012px">VDLAAR</span></div>
<div class="t" style="left:575px;top:225.20px;width:62px;text-align:right;font-size:12.4px;line-height:12.4px;color:#000"><span style="letter-spacing:0.3px;margin-right:-0.3px">93906</span></div>
<div class="t" style="left:641px;top:225.20px;width:61px;overflow:hidden;font-size:12.4px;line-height:12.4px;color:#000"><span style="letter-spacing:0.638px">Zonneveeld</span></div>
<div class="t" style="left:703px;top:225.20px;width:62px;text-align:right;font-size:12.4px;line-height:12.4px;color:#000"><span style="letter-spacing:0.3px;margin-right:-0.3px">59058929</span></div>
<div class="t" style="left:769px;top:225.20px;width:61px;overflow:hidden;font-size:12.4px;line-height:12.4px;color:#000"><span style="letter-spacing:0.807px">MeerZorg</span></div>
<div class="t" style="left:834px;top:225.20px;width:61px;overflow:hidden;font-size:12.4px;line-height:12.4px;color:#000;letter-spacing:0.3px;-webkit-text-stroke:0.25px #000">########</div>
<div class="t" style="left:898px;top:225.20px;width:61px;overflow:hidden;font-size:12.4px;line-height:12.4px;color:#000;letter-spacing:0.3px;-webkit-text-stroke:0.25px #000">########</div>
<div class="t" style="left:959px;top:225.20px;width:62px;text-align:right;font-size:12.4px;line-height:12.4px;color:#000"><span style="letter-spacing:0.3px;margin-right:-0.3px">2212</span></div>
<div class="t" style="left:1023px;top:225.20px;width:62px;text-align:right;font-size:12.4px;line-height:12.4px;color:#000"><span style="letter-spacing:0.3px;margin-right:-0.3px">91859,06</span></div>
<div class="t" style="left:1087px;top:225.20px;width:62px;text-align:right;font-size:12.4px;line-height:12.4px;color:#000"><span style="letter-spacing:0.3px;margin-right:-0.3px">0</span></div>
<div class="t" style="left:2px;top:245.20px;width:61px;overflow:hidden;font-size:12.4px;line-height:12.4px;color:#000"><span style="letter-spacing:1.025px">AW</span>319<span style="letter-spacing:0.574px">_</span>221001</div>
<div class="t" style="left:65px;top:245.20px;width:61px;overflow:hidden;font-size:12.4px;line-height:12.4px;color:#000"><span style="letter-spacing:0.989px">retour_</span>221001</div>
<div class="t" style="left:127px;top:245.20px;width:62px;text-align:right;font-size:12.4px;line-height:12.4px;color:#000"><span style="letter-spacing:0.3px;margin-right:-0.3px">187</span></div>
<div class="t" style="left:193px;top:245.20px;width:61px;overflow:hidden;font-size:12.4px;line-height:12.4px;color:#000"><span style="letter-spacing:1.025px">AW</span>319</div>
<div class="t" style="left:257px;top:245.20px;width:61px;overflow:hidden;font-size:12.4px;line-height:12.4px;color:#000"><span style="letter-spacing:0.167px">WLZ</span></div>
<div class="t" style="left:319px;top:245.20px;width:62px;text-align:right;font-size:12.4px;line-height:12.4px;color:#000"><span style="letter-spacing:0.3px;margin-right:-0.3px">1</span></div>
<div class="t" style="left:383px;top:245.20px;width:62px;text-align:right;font-size:12.4px;line-height:12.4px;color:#000"><span style="letter-spacing:0.3px;margin-right:-0.3px">4</span></div>
<div class="t" style="left:449px;top:245.20px;width:61px;overflow:hidden;font-size:12.4px;line-height:12.4px;color:#000"><span style="letter-spacing:-0.265px">T</span></div>
<div class="t" style="left:513px;top:245.20px;width:61px;overflow:hidden;font-size:12.4px;line-height:12.4px;color:#000"><span style="letter-spacing:-0.012px">VDLAAR</span></div>
<div class="t" style="left:575px;top:245.20px;width:62px;text-align:right;font-size:12.4px;line-height:12.4px;color:#000"><span style="letter-spacing:0.3px;margin-right:-0.3px">93906</span></div>
<div class="t" style="left:641px;top:245.20px;width:61px;overflow:hidden;font-size:12.4px;line-height:12.4px;color:#000"><span style="letter-spacing:0.638px">Zonneveeld</span></div>
<div class="t" style="left:703px;top:245.20px;width:62px;text-align:right;font-size:12.4px;line-height:12.4px;color:#000"><span style="letter-spacing:0.3px;margin-right:-0.3px">59058929</span></div>
<div class="t" style="left:769px;top:245.20px;width:61px;overflow:hidden;font-size:12.4px;line-height:12.4px;color:#000"><span style="letter-spacing:0.807px">MeerZorg</span></div>
<div class="t" style="left:834px;top:245.20px;width:61px;overflow:hidden;font-size:12.4px;line-height:12.4px;color:#000;letter-spacing:0.3px;-webkit-text-stroke:0.25px #000">########</div>
<div class="t" style="left:898px;top:245.20px;width:61px;overflow:hidden;font-size:12.4px;line-height:12.4px;color:#000;letter-spacing:0.3px;-webkit-text-stroke:0.25px #000">########</div>
<div class="t" style="left:959px;top:245.20px;width:62px;text-align:right;font-size:12.4px;line-height:12.4px;color:#000"><span style="letter-spacing:0.3px;margin-right:-0.3px">2212</span></div>
<div class="t" style="left:1023px;top:245.20px;width:62px;text-align:right;font-size:12.4px;line-height:12.4px;color:#000"><span style="letter-spacing:0.3px;margin-right:-0.3px">91859,06</span></div>
<div class="t" style="left:1087px;top:245.20px;width:62px;text-align:right;font-size:12.4px;line-height:12.4px;color:#000"><span style="letter-spacing:0.3px;margin-right:-0.3px">0</span></div>
<div class="t" style="left:2px;top:265.20px;width:61px;overflow:hidden;font-size:12.4px;line-height:12.4px;color:#000"><span style="letter-spacing:1.025px">AW</span>319<span style="letter-spacing:0.574px">_</span>221001</div>
<div class="t" style="left:65px;top:265.20px;width:61px;overflow:hidden;font-size:12.4px;line-height:12.4px;color:#000"><span style="letter-spacing:0.989px">retour_</span>221001</div>
<div class="t" style="left:127px;top:265.20px;width:62px;text-align:right;font-size:12.4px;line-height:12.4px;color:#000"><span style="letter-spacing:0.3px;margin-right:-0.3px">187</span></div>
<div class="t" style="left:193px;top:265.20px;width:61px;overflow:hidden;font-size:12.4px;line-height:12.4px;color:#000"><span style="letter-spacing:1.025px">AW</span>319</div>
<div class="t" style="left:257px;top:265.20px;width:61px;overflow:hidden;font-size:12.4px;line-height:12.4px;color:#000"><span style="letter-spacing:0.167px">WLZ</span></div>
<div class="t" style="left:319px;top:265.20px;width:62px;text-align:right;font-size:12.4px;line-height:12.4px;color:#000"><span style="letter-spacing:0.3px;margin-right:-0.3px">1</span></div>
<div class="t" style="left:383px;top:265.20px;width:62px;text-align:right;font-size:12.4px;line-height:12.4px;color:#000"><span style="letter-spacing:0.3px;margin-right:-0.3px">4</span></div>
<div class="t" style="left:449px;top:265.20px;width:61px;overflow:hidden;font-size:12.4px;line-height:12.4px;color:#000"><span style="letter-spacing:-0.265px">T</span></div>
<div class="t" style="left:513px;top:265.20px;width:61px;overflow:hidden;font-size:12.4px;line-height:12.4px;color:#000"><span style="letter-spacing:-0.012px">VDLAAR</span></div>
<div class="t" style="left:575px;top:265.20px;width:62px;text-align:right;font-size:12.4px;line-height:12.4px;color:#000"><span style="letter-spacing:0.3px;margin-right:-0.3px">93906</span></div>
<div class="t" style="left:641px;top:265.20px;width:61px;overflow:hidden;font-size:12.4px;line-height:12.4px;color:#000"><span style="letter-spacing:0.638px">Zonneveeld</span></div>
<div class="t" style="left:703px;top:265.20px;width:62px;text-align:right;font-size:12.4px;line-height:12.4px;color:#000"><span style="letter-spacing:0.3px;margin-right:-0.3px">59058929</span></div>
<div class="t" style="left:769px;top:265.20px;width:61px;overflow:hidden;font-size:12.4px;line-height:12.4px;color:#000"><span style="letter-spacing:0.807px">MeerZorg</span></div>
<div class="t" style="left:834px;top:265.20px;width:61px;overflow:hidden;font-size:12.4px;line-height:12.4px;color:#000;letter-spacing:0.3px;-webkit-text-stroke:0.25px #000">########</div>
<div class="t" style="left:898px;top:265.20px;width:61px;overflow:hidden;font-size:12.4px;line-height:12.4px;color:#000;letter-spacing:0.3px;-webkit-text-stroke:0.25px #000">########</div>
<div class="t" style="left:959px;top:265.20px;width:62px;text-align:right;font-size:12.4px;line-height:12.4px;color:#000"><span style="letter-spacing:0.3px;margin-right:-0.3px">2212</span></div>
<div class="t" style="left:1023px;top:265.20px;width:62px;text-align:right;font-size:12.4px;line-height:12.4px;color:#000"><span style="letter-spacing:0.3px;margin-right:-0.3px">91859,06</span></div>
<div class="t" style="left:1087px;top:265.20px;width:62px;text-align:right;font-size:12.4px;line-height:12.4px;color:#000"><span style="letter-spacing:0.3px;margin-right:-0.3px">0</span></div>
<div class="t" style="left:2px;top:285.20px;width:61px;overflow:hidden;font-size:12.4px;line-height:12.4px;color:#000"><span style="letter-spacing:1.025px">AW</span>319<span style="letter-spacing:0.574px">_</span>221001</div>
<div class="t" style="left:65px;top:285.20px;width:61px;overflow:hidden;font-size:12.4px;line-height:12.4px;color:#000"><span style="letter-spacing:0.989px">retour_</span>221001</div>
<div class="t" style="left:127px;top:285.20px;width:62px;text-align:right;font-size:12.4px;line-height:12.4px;color:#000"><span style="letter-spacing:0.3px;margin-right:-0.3px">187</span></div>
<div class="t" style="left:193px;top:285.20px;width:61px;overflow:hidden;font-size:12.4px;line-height:12.4px;color:#000"><span style="letter-spacing:1.025px">AW</span>319</div>
<div class="t" style="left:257px;top:285.20px;width:61px;overflow:hidden;font-size:12.4px;line-height:12.4px;color:#000"><span style="letter-spacing:0.167px">WLZ</span></div>
<div class="t" style="left:319px;top:285.20px;width:62px;text-align:right;font-size:12.4px;line-height:12.4px;color:#000"><span style="letter-spacing:0.3px;margin-right:-0.3px">1</span></div>
<div class="t" style="left:383px;top:285.20px;width:62px;text-align:right;font-size:12.4px;line-height:12.4px;color:#000"><span style="letter-spacing:0.3px;margin-right:-0.3px">4</span></div>
<div class="t" style="left:449px;top:285.20px;width:61px;overflow:hidden;font-size:12.4px;line-height:12.4px;color:#000"><span style="letter-spacing:-0.265px">T</span></div>
<div class="t" style="left:513px;top:285.20px;width:61px;overflow:hidden;font-size:12.4px;line-height:12.4px;color:#000"><span style="letter-spacing:-0.012px">VDLAAR</span></div>
<div class="t" style="left:575px;top:285.20px;width:62px;text-align:right;font-size:12.4px;line-height:12.4px;color:#000"><span style="letter-spacing:0.3px;margin-right:-0.3px">93906</span></div>
<div class="t" style="left:641px;top:285.20px;width:61px;overflow:hidden;font-size:12.4px;line-height:12.4px;color:#000"><span style="letter-spacing:0.638px">Zonneveeld</span></div>
<div class="t" style="left:703px;top:285.20px;width:62px;text-align:right;font-size:12.4px;line-height:12.4px;color:#000"><span style="letter-spacing:0.3px;margin-right:-0.3px">59058929</span></div>
<div class="t" style="left:769px;top:285.20px;width:61px;overflow:hidden;font-size:12.4px;line-height:12.4px;color:#000"><span style="letter-spacing:0.807px">MeerZorg</span></div>
<div class="t" style="left:834px;top:285.20px;width:61px;overflow:hidden;font-size:12.4px;line-height:12.4px;color:#000;letter-spacing:0.3px;-webkit-text-stroke:0.25px #000">########</div>
<div class="t" style="left:898px;top:285.20px;width:61px;overflow:hidden;font-size:12.4px;line-height:12.4px;color:#000;letter-spacing:0.3px;-webkit-text-stroke:0.25px #000">########</div>
<div class="t" style="left:959px;top:285.20px;width:62px;text-align:right;font-size:12.4px;line-height:12.4px;color:#000"><span style="letter-spacing:0.3px;margin-right:-0.3px">2212</span></div>
<div class="t" style="left:1023px;top:285.20px;width:62px;text-align:right;font-size:12.4px;line-height:12.4px;color:#000"><span style="letter-spacing:0.3px;margin-right:-0.3px">91859,06</span></div>
<div class="t" style="left:1087px;top:285.20px;width:62px;text-align:right;font-size:12.4px;line-height:12.4px;color:#000"><span style="letter-spacing:0.3px;margin-right:-0.3px">0</span></div>
<div class="t" style="left:2px;top:305.20px;width:61px;overflow:hidden;font-size:12.4px;line-height:12.4px;color:#000"><span style="letter-spacing:1.025px">AW</span>319<span style="letter-spacing:0.574px">_</span>221001</div>
<div class="t" style="left:65px;top:305.20px;width:61px;overflow:hidden;font-size:12.4px;line-height:12.4px;color:#000"><span style="letter-spacing:0.989px">retour_</span>221001</div>
<div class="t" style="left:127px;top:305.20px;width:62px;text-align:right;font-size:12.4px;line-height:12.4px;color:#000"><span style="letter-spacing:0.3px;margin-right:-0.3px">187</span></div>
<div class="t" style="left:193px;top:305.20px;width:61px;overflow:hidden;font-size:12.4px;line-height:12.4px;color:#000"><span style="letter-spacing:1.025px">AW</span>319</div>
<div class="t" style="left:257px;top:305.20px;width:61px;overflow:hidden;font-size:12.4px;line-height:12.4px;color:#000"><span style="letter-spacing:0.167px">WLZ</span></div>
<div class="t" style="left:319px;top:305.20px;width:62px;text-align:right;font-size:12.4px;line-height:12.4px;color:#000"><span style="letter-spacing:0.3px;margin-right:-0.3px">1</span></div>
<div class="t" style="left:383px;top:305.20px;width:62px;text-align:right;font-size:12.4px;line-height:12.4px;color:#000"><span style="letter-spacing:0.3px;margin-right:-0.3px">4</span></div>
<div class="t" style="left:449px;top:305.20px;width:61px;overflow:hidden;font-size:12.4px;line-height:12.4px;color:#000"><span style="letter-spacing:-0.265px">T</span></div>
<div class="t" style="left:513px;top:305.20px;width:61px;overflow:hidden;font-size:12.4px;line-height:12.4px;color:#000"><span style="letter-spacing:-0.012px">VDLAAR</span></div>
<div class="t" style="left:575px;top:305.20px;width:62px;text-align:right;font-size:12.4px;line-height:12.4px;color:#000"><span style="letter-spacing:0.3px;margin-right:-0.3px">93906</span></div>
<div class="t" style="left:641px;top:305.20px;width:61px;overflow:hidden;font-size:12.4px;line-height:12.4px;color:#000"><span style="letter-spacing:0.638px">Zonneveeld</span></div>
<div class="t" style="left:703px;top:305.20px;width:62px;text-align:right;font-size:12.4px;line-height:12.4px;color:#000"><span style="letter-spacing:0.3px;margin-right:-0.3px">59058929</span></div>
<div class="t" style="left:769px;top:305.20px;width:61px;overflow:hidden;font-size:12.4px;line-height:12.4px;color:#000"><span style="letter-spacing:0.807px">MeerZorg</span></div>
<div class="t" style="left:834px;top:305.20px;width:61px;overflow:hidden;font-size:12.4px;line-height:12.4px;color:#000;letter-spacing:0.3px;-webkit-text-stroke:0.25px #000">########</div>
<div class="t" style="left:898px;top:305.20px;width:61px;overflow:hidden;font-size:12.4px;line-height:12.4px;color:#000;letter-spacing:0.3px;-webkit-text-stroke:0.25px #000">########</div>
<div class="t" style="left:959px;top:305.20px;width:62px;text-align:right;font-size:12.4px;line-height:12.4px;color:#000"><span style="letter-spacing:0.3px;margin-right:-0.3px">2212</span></div>
<div class="t" style="left:1023px;top:305.20px;width:62px;text-align:right;font-size:12.4px;line-height:12.4px;color:#000"><span style="letter-spacing:0.3px;margin-right:-0.3px">91859,06</span></div>
<div class="t" style="left:1087px;top:305.20px;width:62px;text-align:right;font-size:12.4px;line-height:12.4px;color:#000"><span style="letter-spacing:0.3px;margin-right:-0.3px">0</span></div>
<div class="t" style="left:2px;top:325.20px;width:61px;overflow:hidden;font-size:12.4px;line-height:12.4px;color:#000"><span style="letter-spacing:1.025px">AW</span>319<span style="letter-spacing:0.574px">_</span>221001</div>
<div class="t" style="left:65px;top:325.20px;width:61px;overflow:hidden;font-size:12.4px;line-height:12.4px;color:#000"><span style="letter-spacing:0.989px">retour_</span>221001</div>
<div class="t" style="left:127px;top:325.20px;width:62px;text-align:right;font-size:12.4px;line-height:12.4px;color:#000"><span style="letter-spacing:0.3px;margin-right:-0.3px">187</span></div>
<div class="t" style="left:193px;top:325.20px;width:61px;overflow:hidden;font-size:12.4px;line-height:12.4px;color:#000"><span style="letter-spacing:1.025px">AW</span>319</div>
<div class="t" style="left:257px;top:325.20px;width:61px;overflow:hidden;font-size:12.4px;line-height:12.4px;color:#000"><span style="letter-spacing:0.167px">WLZ</span></div>
<div class="t" style="left:319px;top:325.20px;width:62px;text-align:right;font-size:12.4px;line-height:12.4px;color:#000"><span style="letter-spacing:0.3px;margin-right:-0.3px">1</span></div>
<div class="t" style="left:383px;top:325.20px;width:62px;text-align:right;font-size:12.4px;line-height:12.4px;color:#000"><span style="letter-spacing:0.3px;margin-right:-0.3px">4</span></div>
<div class="t" style="left:449px;top:325.20px;width:61px;overflow:hidden;font-size:12.4px;line-height:12.4px;color:#000"><span style="letter-spacing:-0.265px">T</span></div>
<div class="t" style="left:513px;top:325.20px;width:61px;overflow:hidden;font-size:12.4px;line-height:12.4px;color:#000"><span style="letter-spacing:-0.012px">VDLAAR</span></div>
<div class="t" style="left:575px;top:325.20px;width:62px;text-align:right;font-size:12.4px;line-height:12.4px;color:#000"><span style="letter-spacing:0.3px;margin-right:-0.3px">93906</span></div>
<div class="t" style="left:641px;top:325.20px;width:61px;overflow:hidden;font-size:12.4px;line-height:12.4px;color:#000"><span style="letter-spacing:0.638px">Zonneveeld</span></div>
<div class="t" style="left:703px;top:325.20px;width:62px;text-align:right;font-size:12.4px;line-height:12.4px;color:#000"><span style="letter-spacing:0.3px;margin-right:-0.3px">59058929</span></div>
<div class="t" style="left:769px;top:325.20px;width:61px;overflow:hidden;font-size:12.4px;line-height:12.4px;color:#000"><span style="letter-spacing:0.807px">MeerZorg</span></div>
<div class="t" style="left:834px;top:325.20px;width:61px;overflow:hidden;font-size:12.4px;line-height:12.4px;color:#000;letter-spacing:0.3px;-webkit-text-stroke:0.25px #000">########</div>
<div class="t" style="left:898px;top:325.20px;width:61px;overflow:hidden;font-size:12.4px;line-height:12.4px;color:#000;letter-spacing:0.3px;-webkit-text-stroke:0.25px #000">########</div>
<div class="t" style="left:959px;top:325.20px;width:62px;text-align:right;font-size:12.4px;line-height:12.4px;color:#000"><span style="letter-spacing:0.3px;margin-right:-0.3px">2212</span></div>
<div class="t" style="left:1023px;top:325.20px;width:62px;text-align:right;font-size:12.4px;line-height:12.4px;color:#000"><span style="letter-spacing:0.3px;margin-right:-0.3px">91859,06</span></div>
<div class="t" style="left:1087px;top:325.20px;width:62px;text-align:right;font-size:12.4px;line-height:12.4px;color:#000"><span style="letter-spacing:0.3px;margin-right:-0.3px">0</span></div>
<div class="t" style="left:2px;top:345.20px;width:61px;overflow:hidden;font-size:12.4px;line-height:12.4px;color:#000"><span style="letter-spacing:1.025px">AW</span>319<span style="letter-spacing:0.574px">_</span>221001</div>
<div class="t" style="left:65px;top:345.20px;width:61px;overflow:hidden;font-size:12.4px;line-height:12.4px;color:#000"><span style="letter-spacing:0.989px">retour_</span>221001</div>
<div class="t" style="left:127px;top:345.20px;width:62px;text-align:right;font-size:12.4px;line-height:12.4px;color:#000"><span style="letter-spacing:0.3px;margin-right:-0.3px">187</span></div>
<div class="t" style="left:193px;top:345.20px;width:61px;overflow:hidden;font-size:12.4px;line-height:12.4px;color:#000"><span style="letter-spacing:1.025px">AW</span>319</div>
<div class="t" style="left:257px;top:345.20px;width:61px;overflow:hidden;font-size:12.4px;line-height:12.4px;color:#000"><span style="letter-spacing:0.167px">WLZ</span></div>
<div class="t" style="left:319px;top:345.20px;width:62px;text-align:right;font-size:12.4px;line-height:12.4px;color:#000"><span style="letter-spacing:0.3px;margin-right:-0.3px">1</span></div>
<div class="t" style="left:383px;top:345.20px;width:62px;text-align:right;font-size:12.4px;line-height:12.4px;color:#000"><span style="letter-spacing:0.3px;margin-right:-0.3px">4</span></div>
<div class="t" style="left:449px;top:345.20px;width:61px;overflow:hidden;font-size:12.4px;line-height:12.4px;color:#000"><span style="letter-spacing:-0.265px">T</span></div>
<div class="t" style="left:513px;top:345.20px;width:61px;overflow:hidden;font-size:12.4px;line-height:12.4px;color:#000"><span style="letter-spacing:-0.012px">VDLAAR</span></div>
<div class="t" style="left:575px;top:345.20px;width:62px;text-align:right;font-size:12.4px;line-height:12.4px;color:#000"><span style="letter-spacing:0.3px;margin-right:-0.3px">93906</span></div>
<div class="t" style="left:641px;top:345.20px;width:61px;overflow:hidden;font-size:12.4px;line-height:12.4px;color:#000"><span style="letter-spacing:0.638px">Zonneveeld</span></div>
<div class="t" style="left:703px;top:345.20px;width:62px;text-align:right;font-size:12.4px;line-height:12.4px;color:#000"><span style="letter-spacing:0.3px;margin-right:-0.3px">59058929</span></div>
<div class="t" style="left:769px;top:345.20px;width:61px;overflow:hidden;font-size:12.4px;line-height:12.4px;color:#000"><span style="letter-spacing:0.807px">MeerZorg</span></div>
<div class="t" style="left:834px;top:345.20px;width:61px;overflow:hidden;font-size:12.4px;line-height:12.4px;color:#000;letter-spacing:0.3px;-webkit-text-stroke:0.25px #000">########</div>
<div class="t" style="left:898px;top:345.20px;width:61px;overflow:hidden;font-size:12.4px;line-height:12.4px;color:#000;letter-spacing:0.3px;-webkit-text-stroke:0.25px #000">########</div>
<div class="t" style="left:959px;top:345.20px;width:62px;text-align:right;font-size:12.4px;line-height:12.4px;color:#000"><span style="letter-spacing:0.3px;margin-right:-0.3px">2212</span></div>
<div class="t" style="left:1023px;top:345.20px;width:62px;text-align:right;font-size:12.4px;line-height:12.4px;color:#000"><span style="letter-spacing:0.3px;margin-right:-0.3px">91859,06</span></div>
<div class="t" style="left:1087px;top:345.20px;width:62px;text-align:right;font-size:12.4px;line-height:12.4px;color:#000"><span style="letter-spacing:0.3px;margin-right:-0.3px">0</span></div>
<div class="t" style="left:2px;top:365.20px;width:61px;overflow:hidden;font-size:12.4px;line-height:12.4px;color:#000"><span style="letter-spacing:1.025px">AW</span>319<span style="letter-spacing:0.574px">_</span>221001</div>
<div class="t" style="left:65px;top:365.20px;width:61px;overflow:hidden;font-size:12.4px;line-height:12.4px;color:#000"><span style="letter-spacing:0.989px">retour_</span>221001</div>
<div class="t" style="left:127px;top:365.20px;width:62px;text-align:right;font-size:12.4px;line-height:12.4px;color:#000"><span style="letter-spacing:0.3px;margin-right:-0.3px">187</span></div>
<div class="t" style="left:193px;top:365.20px;width:61px;overflow:hidden;font-size:12.4px;line-height:12.4px;color:#000"><span style="letter-spacing:1.025px">AW</span>319</div>
<div class="t" style="left:257px;top:365.20px;width:61px;overflow:hidden;font-size:12.4px;line-height:12.4px;color:#000"><span style="letter-spacing:0.167px">WLZ</span></div>
<div class="t" style="left:319px;top:365.20px;width:62px;text-align:right;font-size:12.4px;line-height:12.4px;color:#000"><span style="letter-spacing:0.3px;margin-right:-0.3px">1</span></div>
<div class="t" style="left:383px;top:365.20px;width:62px;text-align:right;font-size:12.4px;line-height:12.4px;color:#000"><span style="letter-spacing:0.3px;margin-right:-0.3px">4</span></div>
<div class="t" style="left:449px;top:365.20px;width:61px;overflow:hidden;font-size:12.4px;line-height:12.4px;color:#000"><span style="letter-spacing:-0.265px">T</span></div>
<div class="t" style="left:513px;top:365.20px;width:61px;overflow:hidden;font-size:12.4px;line-height:12.4px;color:#000"><span style="letter-spacing:-0.012px">VDLAAR</span></div>
<div class="t" style="left:575px;top:365.20px;width:62px;text-align:right;font-size:12.4px;line-height:12.4px;color:#000"><span style="letter-spacing:0.3px;margin-right:-0.3px">93906</span></div>
<div class="t" style="left:641px;top:365.20px;width:61px;overflow:hidden;font-size:12.4px;line-height:12.4px;color:#000"><span style="letter-spacing:0.638px">Zonneveeld</span></div>
<div class="t" style="left:703px;top:365.20px;width:62px;text-align:right;font-size:12.4px;line-height:12.4px;color:#000"><span style="letter-spacing:0.3px;margin-right:-0.3px">59058929</span></div>
<div class="t" style="left:769px;top:365.20px;width:61px;overflow:hidden;font-size:12.4px;line-height:12.4px;color:#000"><span style="letter-spacing:0.807px">MeerZorg</span></div>
<div class="t" style="left:834px;top:365.20px;width:61px;overflow:hidden;font-size:12.4px;line-height:12.4px;color:#000;letter-spacing:0.3px;-webkit-text-stroke:0.25px #000">########</div>
<div class="t" style="left:898px;top:365.20px;width:61px;overflow:hidden;font-size:12.4px;line-height:12.4px;color:#000;letter-spacing:0.3px;-webkit-text-stroke:0.25px #000">########</div>
<div class="t" style="left:959px;top:365.20px;width:62px;text-align:right;font-size:12.4px;line-height:12.4px;color:#000"><span style="letter-spacing:0.3px;margin-right:-0.3px">2212</span></div>
<div class="t" style="left:1023px;top:365.20px;width:62px;text-align:right;font-size:12.4px;line-height:12.4px;color:#000"><span style="letter-spacing:0.3px;margin-right:-0.3px">91859,06</span></div>
<div class="t" style="left:1087px;top:365.20px;width:62px;text-align:right;font-size:12.4px;line-height:12.4px;color:#000"><span style="letter-spacing:0.3px;margin-right:-0.3px">0</span></div>
<div class="t" style="left:2px;top:385.20px;width:61px;overflow:hidden;font-size:12.4px;line-height:12.4px;color:#000"><span style="letter-spacing:1.025px">AW</span>319<span style="letter-spacing:0.574px">_</span>221001</div>
<div class="t" style="left:65px;top:385.20px;width:61px;overflow:hidden;font-size:12.4px;line-height:12.4px;color:#000"><span style="letter-spacing:0.989px">retour_</span>221001</div>
<div class="t" style="left:127px;top:385.20px;width:62px;text-align:right;font-size:12.4px;line-height:12.4px;color:#000"><span style="letter-spacing:0.3px;margin-right:-0.3px">187</span></div>
<div class="t" style="left:193px;top:385.20px;width:61px;overflow:hidden;font-size:12.4px;line-height:12.4px;color:#000"><span style="letter-spacing:1.025px">AW</span>319</div>
<div class="t" style="left:257px;top:385.20px;width:61px;overflow:hidden;font-size:12.4px;line-height:12.4px;color:#000"><span style="letter-spacing:0.167px">WLZ</span></div>
<div class="t" style="left:319px;top:385.20px;width:62px;text-align:right;font-size:12.4px;line-height:12.4px;color:#000"><span style="letter-spacing:0.3px;margin-right:-0.3px">1</span></div>
<div class="t" style="left:383px;top:385.20px;width:62px;text-align:right;font-size:12.4px;line-height:12.4px;color:#000"><span style="letter-spacing:0.3px;margin-right:-0.3px">4</span></div>
<div class="t" style="left:449px;top:385.20px;width:61px;overflow:hidden;font-size:12.4px;line-height:12.4px;color:#000"><span style="letter-spacing:-0.265px">T</span></div>
<div class="t" style="left:513px;top:385.20px;width:61px;overflow:hidden;font-size:12.4px;line-height:12.4px;color:#000"><span style="letter-spacing:-0.012px">VDLAAR</span></div>
<div class="t" style="left:575px;top:385.20px;width:62px;text-align:right;font-size:12.4px;line-height:12.4px;color:#000"><span style="letter-spacing:0.3px;margin-right:-0.3px">93906</span></div>
<div class="t" style="left:641px;top:385.20px;width:61px;overflow:hidden;font-size:12.4px;line-height:12.4px;color:#000"><span style="letter-spacing:0.638px">Zonneveeld</span></div>
<div class="t" style="left:703px;top:385.20px;width:62px;text-align:right;font-size:12.4px;line-height:12.4px;color:#000"><span style="letter-spacing:0.3px;margin-right:-0.3px">59058929</span></div>
<div class="t" style="left:769px;top:385.20px;width:61px;overflow:hidden;font-size:12.4px;line-height:12.4px;color:#000"><span style="letter-spacing:0.807px">MeerZorg</span></div>
<div class="t" style="left:834px;top:385.20px;width:61px;overflow:hidden;font-size:12.4px;line-height:12.4px;color:#000;letter-spacing:0.3px;-webkit-text-stroke:0.25px #000">########</div>
<div class="t" style="left:898px;top:385.20px;width:61px;overflow:hidden;font-size:12.4px;line-height:12.4px;color:#000;letter-spacing:0.3px;-webkit-text-stroke:0.25px #000">########</div>
<div class="t" style="left:959px;top:385.20px;width:62px;text-align:right;font-size:12.4px;line-height:12.4px;color:#000"><span style="letter-spacing:0.3px;margin-right:-0.3px">2212</span></div>
<div class="t" style="left:1023px;top:385.20px;width:62px;text-align:right;font-size:12.4px;line-height:12.4px;color:#000"><span style="letter-spacing:0.3px;margin-right:-0.3px">91859,06</span></div>
<div class="t" style="left:1087px;top:385.20px;width:62px;text-align:right;font-size:12.4px;line-height:12.4px;color:#000"><span style="letter-spacing:0.3px;margin-right:-0.3px">0</span></div>
<div class="t" style="left:2px;top:405.20px;width:61px;overflow:hidden;font-size:12.4px;line-height:12.4px;color:#000"><span style="letter-spacing:1.025px">AW</span>319<span style="letter-spacing:0.574px">_</span>221001</div>
<div class="t" style="left:65px;top:405.20px;width:61px;overflow:hidden;font-size:12.4px;line-height:12.4px;color:#000"><span style="letter-spacing:0.989px">retour_</span>221001</div>
<div class="t" style="left:127px;top:405.20px;width:62px;text-align:right;font-size:12.4px;line-height:12.4px;color:#000"><span style="letter-spacing:0.3px;margin-right:-0.3px">187</span></div>
<div class="t" style="left:193px;top:405.20px;width:61px;overflow:hidden;font-size:12.4px;line-height:12.4px;color:#000"><span style="letter-spacing:1.025px">AW</span>319</div>
<div class="t" style="left:257px;top:405.20px;width:61px;overflow:hidden;font-size:12.4px;line-height:12.4px;color:#000"><span style="letter-spacing:0.167px">WLZ</span></div>
<div class="t" style="left:319px;top:405.20px;width:62px;text-align:right;font-size:12.4px;line-height:12.4px;color:#000"><span style="letter-spacing:0.3px;margin-right:-0.3px">1</span></div>
<div class="t" style="left:383px;top:405.20px;width:62px;text-align:right;font-size:12.4px;line-height:12.4px;color:#000"><span style="letter-spacing:0.3px;margin-right:-0.3px">4</span></div>
<div class="t" style="left:449px;top:405.20px;width:61px;overflow:hidden;font-size:12.4px;line-height:12.4px;color:#000"><span style="letter-spacing:-0.265px">T</span></div>
<div class="t" style="left:513px;top:405.20px;width:61px;overflow:hidden;font-size:12.4px;line-height:12.4px;color:#000"><span style="letter-spacing:-0.012px">VDLAAR</span></div>
<div class="t" style="left:575px;top:405.20px;width:62px;text-align:right;font-size:12.4px;line-height:12.4px;color:#000"><span style="letter-spacing:0.3px;margin-right:-0.3px">93906</span></div>
<div class="t" style="left:641px;top:405.20px;width:61px;overflow:hidden;font-size:12.4px;line-height:12.4px;color:#000"><span style="letter-spacing:0.638px">Zonneveeld</span></div>
<div class="t" style="left:703px;top:405.20px;width:62px;text-align:right;font-size:12.4px;line-height:12.4px;color:#000"><span style="letter-spacing:0.3px;margin-right:-0.3px">59058929</span></div>
<div class="t" style="left:769px;top:405.20px;width:61px;overflow:hidden;font-size:12.4px;line-height:12.4px;color:#000"><span style="letter-spacing:0.807px">MeerZorg</span></div>
<div class="t" style="left:834px;top:405.20px;width:61px;overflow:hidden;font-size:12.4px;line-height:12.4px;color:#000;letter-spacing:0.3px;-webkit-text-stroke:0.25px #000">########</div>
<div class="t" style="left:898px;top:405.20px;width:61px;overflow:hidden;font-size:12.4px;line-height:12.4px;color:#000;letter-spacing:0.3px;-webkit-text-stroke:0.25px #000">########</div>
<div class="t" style="left:959px;top:405.20px;width:62px;text-align:right;font-size:12.4px;line-height:12.4px;color:#000"><span style="letter-spacing:0.3px;margin-right:-0.3px">2212</span></div>
<div class="t" style="left:1023px;top:405.20px;width:62px;text-align:right;font-size:12.4px;line-height:12.4px;color:#000"><span style="letter-spacing:0.3px;margin-right:-0.3px">91859,06</span></div>
<div class="t" style="left:1087px;top:405.20px;width:62px;text-align:right;font-size:12.4px;line-height:12.4px;color:#000"><span style="letter-spacing:0.3px;margin-right:-0.3px">0</span></div>
<div class="t" style="left:2px;top:425.20px;width:61px;overflow:hidden;font-size:12.4px;line-height:12.4px;color:#000"><span style="letter-spacing:1.025px">AW</span>319<span style="letter-spacing:0.574px">_</span>221001</div>
<div class="t" style="left:65px;top:425.20px;width:61px;overflow:hidden;font-size:12.4px;line-height:12.4px;color:#000"><span style="letter-spacing:0.989px">retour_</span>221001</div>
<div class="t" style="left:127px;top:425.20px;width:62px;text-align:right;font-size:12.4px;line-height:12.4px;color:#000"><span style="letter-spacing:0.3px;margin-right:-0.3px">187</span></div>
<div class="t" style="left:193px;top:425.20px;width:61px;overflow:hidden;font-size:12.4px;line-height:12.4px;color:#000"><span style="letter-spacing:1.025px">AW</span>319</div>
<div class="t" style="left:257px;top:425.20px;width:61px;overflow:hidden;font-size:12.4px;line-height:12.4px;color:#000"><span style="letter-spacing:0.167px">WLZ</span></div>
<div class="t" style="left:319px;top:425.20px;width:62px;text-align:right;font-size:12.4px;line-height:12.4px;color:#000"><span style="letter-spacing:0.3px;margin-right:-0.3px">1</span></div>
<div class="t" style="left:383px;top:425.20px;width:62px;text-align:right;font-size:12.4px;line-height:12.4px;color:#000"><span style="letter-spacing:0.3px;margin-right:-0.3px">4</span></div>
<div class="t" style="left:449px;top:425.20px;width:61px;overflow:hidden;font-size:12.4px;line-height:12.4px;color:#000"><span style="letter-spacing:-0.265px">T</span></div>
<div class="t" style="left:513px;top:425.20px;width:61px;overflow:hidden;font-size:12.4px;line-height:12.4px;color:#000"><span style="letter-spacing:-0.012px">VDLAAR</span></div>
<div class="t" style="left:575px;top:425.20px;width:62px;text-align:right;font-size:12.4px;line-height:12.4px;color:#000"><span style="letter-spacing:0.3px;margin-right:-0.3px">93906</span></div>
<div class="t" style="left:641px;top:425.20px;width:61px;overflow:hidden;font-size:12.4px;line-height:12.4px;color:#000"><span style="letter-spacing:0.638px">Zonneveeld</span></div>
<div class="t" style="left:703px;top:425.20px;width:62px;text-align:right;font-size:12.4px;line-height:12.4px;color:#000"><span style="letter-spacing:0.3px;margin-right:-0.3px">59058929</span></div>
<div class="t" style="left:769px;top:425.20px;width:61px;overflow:hidden;font-size:12.4px;line-height:12.4px;color:#000"><span style="letter-spacing:0.807px">MeerZorg</span></div>
<div class="t" style="left:834px;top:425.20px;width:61px;overflow:hidden;font-size:12.4px;line-height:12.4px;color:#000;letter-spacing:0.3px;-webkit-text-stroke:0.25px #000">########</div>
<div class="t" style="left:898px;top:425.20px;width:61px;overflow:hidden;font-size:12.4px;line-height:12.4px;color:#000;letter-spacing:0.3px;-webkit-text-stroke:0.25px #000">########</div>
<div class="t" style="left:959px;top:425.20px;width:62px;text-align:right;font-size:12.4px;line-height:12.4px;color:#000"><span style="letter-spacing:0.3px;margin-right:-0.3px">2212</span></div>
<div class="t" style="left:1023px;top:425.20px;width:62px;text-align:right;font-size:12.4px;line-height:12.4px;color:#000"><span style="letter-spacing:0.3px;margin-right:-0.3px">91859,06</span></div>
<div class="t" style="left:1087px;top:425.20px;width:62px;text-align:right;font-size:12.4px;line-height:12.4px;color:#000"><span style="letter-spacing:0.3px;margin-right:-0.3px">0</span></div>
<div class="t" style="left:2px;top:445.20px;width:61px;overflow:hidden;font-size:12.4px;line-height:12.4px;color:#000"><span style="letter-spacing:1.025px">AW</span>319<span style="letter-spacing:0.574px">_</span>221001</div>
<div class="t" style="left:65px;top:445.20px;width:61px;overflow:hidden;font-size:12.4px;line-height:12.4px;color:#000"><span style="letter-spacing:0.989px">retour_</span>221001</div>
<div class="t" style="left:127px;top:445.20px;width:62px;text-align:right;font-size:12.4px;line-height:12.4px;color:#000"><span style="letter-spacing:0.3px;margin-right:-0.3px">187</span></div>
<div class="t" style="left:193px;top:445.20px;width:61px;overflow:hidden;font-size:12.4px;line-height:12.4px;color:#000"><span style="letter-spacing:1.025px">AW</span>319</div>
<div class="t" style="left:257px;top:445.20px;width:61px;overflow:hidden;font-size:12.4px;line-height:12.4px;color:#000"><span style="letter-spacing:0.167px">WLZ</span></div>
<div class="t" style="left:319px;top:445.20px;width:62px;text-align:right;font-size:12.4px;line-height:12.4px;color:#000"><span style="letter-spacing:0.3px;margin-right:-0.3px">1</span></div>
<div class="t" style="left:383px;top:445.20px;width:62px;text-align:right;font-size:12.4px;line-height:12.4px;color:#000"><span style="letter-spacing:0.3px;margin-right:-0.3px">4</span></div>
<div class="t" style="left:449px;top:445.20px;width:61px;overflow:hidden;font-size:12.4px;line-height:12.4px;color:#000"><span style="letter-spacing:-0.265px">T</span></div>
<div class="t" style="left:513px;top:445.20px;width:61px;overflow:hidden;font-size:12.4px;line-height:12.4px;color:#000"><span style="letter-spacing:-0.012px">VDLAAR</span></div>
<div class="t" style="left:575px;top:445.20px;width:62px;text-align:right;font-size:12.4px;line-height:12.4px;color:#000"><span style="letter-spacing:0.3px;margin-right:-0.3px">93906</span></div>
<div class="t" style="left:641px;top:445.20px;width:61px;overflow:hidden;font-size:12.4px;line-height:12.4px;color:#000"><span style="letter-spacing:0.638px">Zonneveeld</span></div>
<div class="t" style="left:703px;top:445.20px;width:62px;text-align:right;font-size:12.4px;line-height:12.4px;color:#000"><span style="letter-spacing:0.3px;margin-right:-0.3px">59058929</span></div>
<div class="t" style="left:769px;top:445.20px;width:61px;overflow:hidden;font-size:12.4px;line-height:12.4px;color:#000"><span style="letter-spacing:0.807px">MeerZorg</span></div>
<div class="t" style="left:834px;top:445.20px;width:61px;overflow:hidden;font-size:12.4px;line-height:12.4px;color:#000;letter-spacing:0.3px;-webkit-text-stroke:0.25px #000">########</div>
<div class="t" style="left:898px;top:445.20px;width:61px;overflow:hidden;font-size:12.4px;line-height:12.4px;color:#000;letter-spacing:0.3px;-webkit-text-stroke:0.25px #000">########</div>
<div class="t" style="left:959px;top:445.20px;width:62px;text-align:right;font-size:12.4px;line-height:12.4px;color:#000"><span style="letter-spacing:0.3px;margin-right:-0.3px">2212</span></div>
<div class="t" style="left:1023px;top:445.20px;width:62px;text-align:right;font-size:12.4px;line-height:12.4px;color:#000"><span style="letter-spacing:0.3px;margin-right:-0.3px">91859,06</span></div>
<div class="t" style="left:1087px;top:445.20px;width:62px;text-align:right;font-size:12.4px;line-height:12.4px;color:#000"><span style="letter-spacing:0.3px;margin-right:-0.3px">0</span></div>
<div class="t" style="left:2px;top:465.20px;width:61px;overflow:hidden;font-size:12.4px;line-height:12.4px;color:#000"><span style="letter-spacing:1.025px">AW</span>319<span style="letter-spacing:0.574px">_</span>221001</div>
<div class="t" style="left:65px;top:465.20px;width:61px;overflow:hidden;font-size:12.4px;line-height:12.4px;color:#000"><span style="letter-spacing:0.989px">retour_</span>221001</div>
<div class="t" style="left:127px;top:465.20px;width:62px;text-align:right;font-size:12.4px;line-height:12.4px;color:#000"><span style="letter-spacing:0.3px;margin-right:-0.3px">187</span></div>
<div class="t" style="left:193px;top:465.20px;width:61px;overflow:hidden;font-size:12.4px;line-height:12.4px;color:#000"><span style="letter-spacing:1.025px">AW</span>319</div>
<div class="t" style="left:257px;top:465.20px;width:61px;overflow:hidden;font-size:12.4px;line-height:12.4px;color:#000"><span style="letter-spacing:0.167px">WLZ</span></div>
<div class="t" style="left:319px;top:465.20px;width:62px;text-align:right;font-size:12.4px;line-height:12.4px;color:#000"><span style="letter-spacing:0.3px;margin-right:-0.3px">1</span></div>
<div class="t" style="left:383px;top:465.20px;width:62px;text-align:right;font-size:12.4px;line-height:12.4px;color:#000"><span style="letter-spacing:0.3px;margin-right:-0.3px">4</span></div>
<div class="t" style="left:449px;top:465.20px;width:61px;overflow:hidden;font-size:12.4px;line-height:12.4px;color:#000"><span style="letter-spacing:-0.265px">T</span></div>
<div class="t" style="left:513px;top:465.20px;width:61px;overflow:hidden;font-size:12.4px;line-height:12.4px;color:#000"><span style="letter-spacing:-0.012px">VDLAAR</span></div>
<div class="t" style="left:575px;top:465.20px;width:62px;text-align:right;font-size:12.4px;line-height:12.4px;color:#000"><span style="letter-spacing:0.3px;margin-right:-0.3px">93906</span></div>
<div class="t" style="left:641px;top:465.20px;width:61px;overflow:hidden;font-size:12.4px;line-height:12.4px;color:#000"><span style="letter-spacing:0.638px">Zonneveeld</span></div>
<div class="t" style="left:703px;top:465.20px;width:62px;text-align:right;font-size:12.4px;line-height:12.4px;color:#000"><span style="letter-spacing:0.3px;margin-right:-0.3px">59058929</span></div>
<div class="t" style="left:769px;top:465.20px;width:61px;overflow:hidden;font-size:12.4px;line-height:12.4px;color:#000"><span style="letter-spacing:0.807px">MeerZorg</span></div>
<div class="t" style="left:834px;top:465.20px;width:61px;overflow:hidden;font-size:12.4px;line-height:12.4px;color:#000;letter-spacing:0.3px;-webkit-text-stroke:0.25px #000">########</div>
<div class="t" style="left:898px;top:465.20px;width:61px;overflow:hidden;font-size:12.4px;line-height:12.4px;color:#000;letter-spacing:0.3px;-webkit-text-stroke:0.25px #000">########</div>
<div class="t" style="left:959px;top:465.20px;width:62px;text-align:right;font-size:12.4px;line-height:12.4px;color:#000"><span style="letter-spacing:0.3px;margin-right:-0.3px">2212</span></div>
<div class="t" style="left:1023px;top:465.20px;width:62px;text-align:right;font-size:12.4px;line-height:12.4px;color:#000"><span style="letter-spacing:0.3px;margin-right:-0.3px">91859,06</span></div>
<div class="t" style="left:1087px;top:465.20px;width:62px;text-align:right;font-size:12.4px;line-height:12.4px;color:#000"><span style="letter-spacing:0.3px;margin-right:-0.3px">0</span></div>
<div class="t" style="left:2px;top:485.20px;width:61px;overflow:hidden;font-size:12.4px;line-height:12.4px;color:#000"><span style="letter-spacing:1.025px">AW</span>319<span style="letter-spacing:0.574px">_</span>221001</div>
<div class="t" style="left:65px;top:485.20px;width:61px;overflow:hidden;font-size:12.4px;line-height:12.4px;color:#000"><span style="letter-spacing:0.989px">retour_</span>221001</div>
<div class="t" style="left:127px;top:485.20px;width:62px;text-align:right;font-size:12.4px;line-height:12.4px;color:#000"><span style="letter-spacing:0.3px;margin-right:-0.3px">187</span></div>
<div class="t" style="left:193px;top:485.20px;width:61px;overflow:hidden;font-size:12.4px;line-height:12.4px;color:#000"><span style="letter-spacing:1.025px">AW</span>319</div>
<div class="t" style="left:257px;top:485.20px;width:61px;overflow:hidden;font-size:12.4px;line-height:12.4px;color:#000"><span style="letter-spacing:0.167px">WLZ</span></div>
<div class="t" style="left:319px;top:485.20px;width:62px;text-align:right;font-size:12.4px;line-height:12.4px;color:#000"><span style="letter-spacing:0.3px;margin-right:-0.3px">1</span></div>
<div class="t" style="left:383px;top:485.20px;width:62px;text-align:right;font-size:12.4px;line-height:12.4px;color:#000"><span style="letter-spacing:0.3px;margin-right:-0.3px">4</span></div>
<div class="t" style="left:449px;top:485.20px;width:61px;overflow:hidden;font-size:12.4px;line-height:12.4px;color:#000"><span style="letter-spacing:-0.265px">T</span></div>
<div class="t" style="left:513px;top:485.20px;width:61px;overflow:hidden;font-size:12.4px;line-height:12.4px;color:#000"><span style="letter-spacing:-0.012px">VDLAAR</span></div>
<div class="t" style="left:575px;top:485.20px;width:62px;text-align:right;font-size:12.4px;line-height:12.4px;color:#000"><span style="letter-spacing:0.3px;margin-right:-0.3px">93906</span></div>
<div class="t" style="left:641px;top:485.20px;width:61px;overflow:hidden;font-size:12.4px;line-height:12.4px;color:#000"><span style="letter-spacing:0.638px">Zonneveeld</span></div>
<div class="t" style="left:703px;top:485.20px;width:62px;text-align:right;font-size:12.4px;line-height:12.4px;color:#000"><span style="letter-spacing:0.3px;margin-right:-0.3px">59058929</span></div>
<div class="t" style="left:769px;top:485.20px;width:61px;overflow:hidden;font-size:12.4px;line-height:12.4px;color:#000"><span style="letter-spacing:0.807px">MeerZorg</span></div>
<div class="t" style="left:834px;top:485.20px;width:61px;overflow:hidden;font-size:12.4px;line-height:12.4px;color:#000;letter-spacing:0.3px;-webkit-text-stroke:0.25px #000">########</div>
<div class="t" style="left:898px;top:485.20px;width:61px;overflow:hidden;font-size:12.4px;line-height:12.4px;color:#000;letter-spacing:0.3px;-webkit-text-stroke:0.25px #000">########</div>
<div class="t" style="left:959px;top:485.20px;width:62px;text-align:right;font-size:12.4px;line-height:12.4px;color:#000"><span style="letter-spacing:0.3px;margin-right:-0.3px">2212</span></div>
<div class="t" style="left:1023px;top:485.20px;width:62px;text-align:right;font-size:12.4px;line-height:12.4px;color:#000"><span style="letter-spacing:0.3px;margin-right:-0.3px">91859,06</span></div>
<div class="t" style="left:1087px;top:485.20px;width:62px;text-align:right;font-size:12.4px;line-height:12.4px;color:#000"><span style="letter-spacing:0.3px;margin-right:-0.3px">0</span></div>
</div>
<div class="r" style="left:1191px;top:237px;width:15px;height:456px;background:#474747;"></div>
<div class="r" style="left:1192px;top:207px;width:13px;height:13px;background:#d6d6d6;"></div>
<svg class="r" style="left:1194px;top:211px;" width="9" height="5" viewBox="0 0 9 5"><path d="M0 5h9L4.5 0z" fill="#2b2b2b"/></svg>
<div class="r" style="left:1192px;top:222px;width:13px;height:15px;background:#d6d6d6;"></div>
<div class="r" style="left:1192px;top:694px;width:13px;height:13px;background:#d6d6d6;"></div>
<svg class="r" style="left:1194px;top:698px;" width="9" height="5" viewBox="0 0 9 5"><path d="M0 0h9L4.5 5z" fill="#2b2b2b"/></svg>
<svg class="r" style="left:28px;top:716px;" width="6" height="9" viewBox="0 0 6 9"><path d="M5 0v8L0 4z" fill="#8a8a8a"/></svg>
<svg class="r" style="left:56px;top:716px;" width="6" height="9" viewBox="0 0 6 9"><path d="M0 0v8L5 4z" fill="#8a8a8a"/></svg>
<div class="r" style="left:101px;top:707px;width:90px;height:24px;background:#ffffff;"></div>
<div class="r" style="left:101px;top:730px;width:90px;height:2px;background:#217346;"></div>
<div class="t" style="left:-54.00px;width:400px;text-align:center;top:714.72px;font-size:12.5px;line-height:12.5px;color:#217346;font-weight:700;">declaraties</div>
<svg class="r" style="left:223px;top:713px;" width="18" height="17" viewBox="0 0 18 17"><circle cx="8.5" cy="8" r="7.2" fill="none" stroke="#fff" stroke-width="1.5"/><path d="M8.5 4v8M4.5 8h8" stroke="#fff" stroke-width="1.8"/></svg>
<div class="r" style="left:726px;top:715px;width:2px;height:2px;background:#eee;"></div>
<div class="r" style="left:726px;top:719px;width:2px;height:2px;background:#eee;"></div>
<div class="r" style="left:726px;top:723px;width:2px;height:2px;background:#eee;"></div>
<div class="r" style="left:744px;top:715px;width:13px;height:13px;background:#d6d6d6;"></div>
<svg class="r" style="left:748px;top:718px;" width="5" height="8" viewBox="0 0 5 8"><path d="M4.2 0v7L0 3.5z" fill="#1e1e1e"/></svg>
<div class="r" style="left:759px;top:714px;width:161px;height:14px;background:#d6d6d6;"></div>
<div class="r" style="left:920px;top:714px;width:254px;height:15px;background:#474747;"></div>
<div class="r" style="left:1174px;top:715px;width:13px;height:13px;background:#d6d6d6;"></div>
<svg class="r" style="left:1179px;top:718px;" width="5" height="8" viewBox="0 0 5 8"><path d="M0 0v7.5L4 3.75z" fill="#1e1e1e"/></svg>
<div class="r" style="left:0px;top:735px;width:1210px;height:1px;background:#525252;"></div>
<div class="t" style="left:12.50px;top:742.49px;font-size:11px;line-height:11px;color:#f2f2f2;font-weight:400;">Gereed</div>
<div class="t" style="left:548.30px;top:741.10px;font-size:11.1px;line-height:11.1px;color:#f2f2f2;font-weight:400;">Gemiddelde: 253048039,7</div>
<div class="t" style="left:695.10px;top:741.10px;font-size:11.1px;line-height:11.1px;color:#f2f2f2;font-weight:400;">Aantal: 557976</div>
<div class="t" style="left:786.30px;top:741.10px;font-size:11.1px;line-height:11.1px;color:#f2f2f2;font-weight:400;">Som: 9,68546E+13</div>
<div class="r" style="left:898px;top:736px;width:40px;height:21px;background:#474747;"></div>
<svg class="r" style="left:911px;top:739px;" width="13" height="13" viewBox="0 0 13 13"><path d="M0.5 0.5h12v12h-12zM4.5 0.5v12M8.5 0.5v12M0.5 4.5h12M0.5 8.5h12" fill="none" stroke="#fff"/></svg>
<svg class="r" style="left:951px;top:739px;" width="14" height="13" viewBox="0 0 14 13"><path d="M0.5 0.5h13v12h-13z" fill="none" stroke="#fff"/><path d="M3.5 2.5h7v8h-7z" fill="none" stroke="#fff"/><path d="M5 4.5h4M5 6.5h4M5 8.5h4" fill="none" stroke="#fff"/></svg>
<svg class="r" style="left:991px;top:739px;" width="14" height="13" viewBox="0 0 14 13"><path d="M0.5 0.5h13v12h-13z" fill="none" stroke="#fff"/><rect x="1" y="1" width="3.8" height="7" fill="#e8e8e8"/><rect x="5.6" y="1" width="3.4" height="7" fill="#e8e8e8"/><path d="M9.5 0.5v8h-9" fill="none" stroke="#fff"/></svg>
<div class="r" style="left:1024px;top:745px;width:8px;height:1px;background:#fff;"></div>
<div class="r" style="left:1037px;top:745px;width:100px;height:1px;background:#fff;"></div>
<div class="r" style="left:1085px;top:741px;width:5px;height:11px;background:#fff;"></div>
<div class="r" style="left:1142px;top:745px;width:9px;height:1px;background:#fff;"></div>
<div class="r" style="left:1146px;top:741px;width:1px;height:9px;background:#fff;"></div>
<div class="t" style="left:1163.50px;top:742.09px;font-size:11px;line-height:11px;color:#f2f2f2;font-weight:400;">100%</div>
<div class="r" style="left:0;top:0;width:1210px;height:758px;box-sizing:border-box;border:1px solid #9e9e9e;pointer-events:none"></div>
<div class="r" style="left:581px;top:55px;width:87px;height:90px;box-sizing:border-box;border:5px solid #e81d25;border-radius:16px"></div>
<div class="r" style="left:-0.5px;top:190px;width:41.5px;height:43.5px;box-sizing:border-box;border:4.6px solid #e81d25;border-radius:10px"></div>
</body></html>
